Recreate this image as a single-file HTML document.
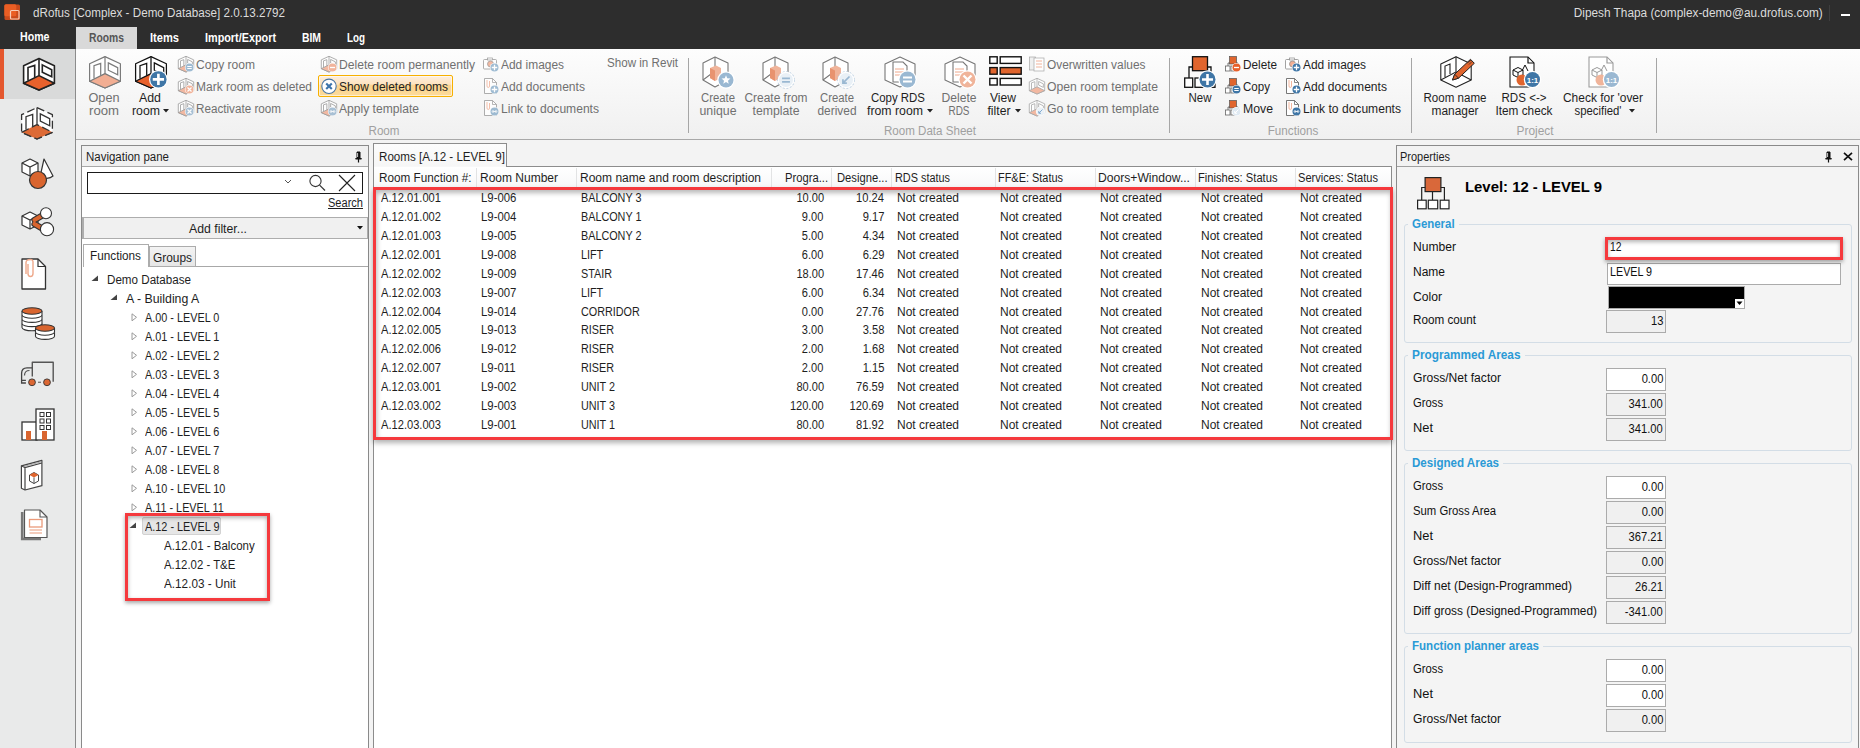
<!DOCTYPE html><html><head><meta charset="utf-8"><style>
html,body{margin:0;padding:0;width:1860px;height:748px;overflow:hidden;background:#f0f0f0;font-family:"Liberation Sans",sans-serif;}
.t{position:absolute;white-space:nowrap;font-family:"Liberation Sans",sans-serif;}
svg{overflow:visible}
</style></head><body>
<div style="position:absolute;left:0px;top:0px;width:1860px;height:49px;background:#2d2d2d"></div>
<svg style="position:absolute;left:4px;top:4px" width="17" height="17" viewBox="0 0 17 17"><rect x="0.5" y="0.5" width="15.5" height="15.5" rx="1.5" fill="#c94a1c"/><rect x="0.3" y="0.3" width="12" height="12" rx="1.5" fill="#ea5e24"/><rect x="6.5" y="6.5" width="8.5" height="8.5" rx="1" fill="none" stroke="#f7cdb8" stroke-width="1.2"/></svg>
<div class="t" style="left:33px;top:4.800000000000001px;line-height:16px;font-size:12px;color:#dcdcdc;font-weight:normal;transform:scaleX(0.9711);transform-origin:left center;">dRofus [Complex - Demo Database] 2.0.13.2792</div>
<div class="t" style="right:37px;top:4.800000000000001px;line-height:16px;font-size:12px;color:#dcdcdc;font-weight:normal;transform:scaleX(0.9852);transform-origin:right center;">Dipesh Thapa (complex-demo@au.drofus.com)</div>
<div style="position:absolute;left:1829px;top:5px;width:1px;height:16px;background:#3e3e3e"></div>
<div style="position:absolute;left:1841px;top:14px;width:9px;height:2px;background:#ffffff"></div>
<div style="position:absolute;left:76px;top:27px;width:61px;height:22px;background:#d9d9d9"></div>
<div class="t" style="left:20px;top:28.9px;line-height:16px;font-size:12px;color:#ffffff;font-weight:bold;transform:scaleX(0.8848);transform-origin:left center;">Home</div>
<div class="t" style="left:89px;top:29.9px;line-height:16px;font-size:12px;color:#555555;font-weight:bold;transform:scaleX(0.8605);transform-origin:left center;">Rooms</div>
<div class="t" style="left:150px;top:29.9px;line-height:16px;font-size:12px;color:#ffffff;font-weight:bold;transform:scaleX(0.9251);transform-origin:left center;">Items</div>
<div class="t" style="left:205px;top:29.9px;line-height:16px;font-size:12px;color:#ffffff;font-weight:bold;transform:scaleX(0.9025);transform-origin:left center;">Import/Export</div>
<div class="t" style="left:302px;top:29.9px;line-height:16px;font-size:12px;color:#ffffff;font-weight:bold;transform:scaleX(0.8638);transform-origin:left center;">BIM</div>
<div class="t" style="left:347px;top:29.9px;line-height:16px;font-size:12px;color:#ffffff;font-weight:bold;transform:scaleX(0.8185);transform-origin:left center;">Log</div>
<div style="position:absolute;left:76px;top:49px;width:1784px;height:90px;background:linear-gradient(#fdfdfd,#f0f0f0)"></div>
<div style="position:absolute;left:76px;top:139px;width:1784px;height:1px;background:#a8a8a8"></div>
<div style="position:absolute;left:688px;top:58px;width:1px;height:75px;background:#a6a6a6"></div>
<div style="position:absolute;left:1169px;top:58px;width:1px;height:75px;background:#a6a6a6"></div>
<div style="position:absolute;left:1411px;top:58px;width:1px;height:75px;background:#a6a6a6"></div>
<div style="position:absolute;left:1656px;top:58px;width:1px;height:75px;background:#a6a6a6"></div>
<div class="t" style="left:83.5px;width:600px;text-align:center;top:123.0px;line-height:16px;font-size:12px;color:#a0a0a0;font-weight:normal;transform:scaleX(0.9684);transform-origin:center center;">Room</div>
<div class="t" style="left:630px;width:600px;text-align:center;top:123.0px;line-height:16px;font-size:12px;color:#a0a0a0;font-weight:normal;transform:scaleX(0.9645);transform-origin:center center;">Room Data Sheet</div>
<div class="t" style="left:992.5px;width:600px;text-align:center;top:123.0px;line-height:16px;font-size:12px;color:#a0a0a0;font-weight:normal;transform:scaleX(0.9706);transform-origin:center center;">Functions</div>
<div class="t" style="left:1235px;width:600px;text-align:center;top:123.0px;line-height:16px;font-size:12px;color:#a0a0a0;font-weight:normal;transform:scaleX(0.9906);transform-origin:center center;">Project</div>
<svg style="position:absolute;left:89px;top:56px;" width="32" height="32" viewBox="0 0 32 32"><path d="M16 0.6 L31.4 7.7 L31.4 25.3 L16 32 L0.6 25.3 L0.6 7.7 Z" fill="#fff" stroke="#7a7a7a" stroke-width="1.2" stroke-linejoin="round"/><path d="M0.6 25.3 L16 17.6 L31.4 25.3 L16 32 Z" fill="#f2ae93" stroke="#7a7a7a" stroke-width="1.2" stroke-linejoin="round"/><path d="M16 0.6 L16 17.6" stroke="#7a7a7a" stroke-width="1.2"/><path d="M5 22.4 L5 9.6 L11.7 7.4 L11.7 19.6" fill="none" stroke="#7a7a7a" stroke-width="1.2"/><path d="M19.3 6.9 L28.7 11.7 L28.7 18.8 L19.3 14.2 Z" fill="none" stroke="#7a7a7a" stroke-width="1.2"/></svg>
<div class="t" style="left:-196.5px;width:600px;text-align:center;top:89.7px;line-height:16px;font-size:12px;color:#707070;font-weight:normal;transform:scaleX(1.0560);transform-origin:center center;">Open</div>
<div class="t" style="left:-196.5px;width:600px;text-align:center;top:102.8px;line-height:16px;font-size:12px;color:#707070;font-weight:normal;transform:scaleX(1.0973);transform-origin:center center;">room</div>
<svg style="position:absolute;left:135px;top:56px;" width="32" height="32" viewBox="0 0 32 32"><path d="M16 0.6 L31.4 7.7 L31.4 25.3 L16 32 L0.6 25.3 L0.6 7.7 Z" fill="#fff" stroke="#111" stroke-width="1.25" stroke-linejoin="round"/><path d="M0.6 25.3 L16 17.6 L31.4 25.3 L16 32 Z" fill="#e8612c" stroke="#111" stroke-width="1.25" stroke-linejoin="round"/><path d="M16 0.6 L16 17.6" stroke="#111" stroke-width="1.25"/><path d="M5 22.4 L5 9.6 L11.7 7.4 L11.7 19.6" fill="none" stroke="#111" stroke-width="1.25"/><path d="M19.3 6.9 L28.7 11.7 L28.7 18.8 L19.3 14.2 Z" fill="none" stroke="#111" stroke-width="1.25"/><circle cx="23.4" cy="23.4" r="9.399999999999999" fill="#fff"/><circle cx="23.4" cy="23.4" r="8.2" fill="#3f76a6"/><path d="M17.7625 23.4 H29.037499999999998 M23.4 17.7625 V29.037499999999998" stroke="#fff" stroke-width="2.665"/></svg>
<div class="t" style="left:-150px;width:600px;text-align:center;top:89.7px;line-height:16px;font-size:12px;color:#1e1e1e;font-weight:normal;transform:scaleX(1.0303);transform-origin:center center;">Add</div>
<div class="t" style="left:-154px;width:600px;text-align:center;top:102.8px;line-height:16px;font-size:12px;color:#1e1e1e;font-weight:normal;transform:scaleX(1.0241);transform-origin:center center;">room</div>
<svg style="position:absolute;left:163px;top:109px" width="6" height="4" viewBox="0 0 6 4"><path d="M0 0 H6 L3 3.5 Z" fill="#222"/></svg>
<svg style="position:absolute;left:178px;top:56px;opacity:0.85;" width="16" height="16" viewBox="0 0 32 32"><path d="M16 0.6 L31.4 7.7 L31.4 25.3 L16 32 L0.6 25.3 L0.6 7.7 Z" fill="#fff" stroke="#8a8a8a" stroke-width="1.6" stroke-linejoin="round"/><path d="M0.6 25.3 L16 17.6 L31.4 25.3 L16 32 Z" fill="#f2ae93" stroke="#8a8a8a" stroke-width="1.6" stroke-linejoin="round"/><path d="M16 0.6 L16 17.6" stroke="#8a8a8a" stroke-width="1.6"/><path d="M5 22.4 L5 9.6 L11.7 7.4 L11.7 19.6" fill="none" stroke="#8a8a8a" stroke-width="1.6"/><path d="M19.3 6.9 L28.7 11.7 L28.7 18.8 L19.3 14.2 Z" fill="none" stroke="#8a8a8a" stroke-width="1.6"/><circle cx="23" cy="23" r="9.2" fill="#fff"/><circle cx="23" cy="23" r="8" fill="#8fb1cc"/><path d="M18.5 21.0 H27.5 M18.5 25.0 H27.5" stroke="#fff" stroke-width="2.0"/></svg>
<div class="t" style="left:196px;top:57.0px;line-height:16px;font-size:12px;color:#707070;font-weight:normal;transform:scaleX(1.0053);transform-origin:left center;">Copy room</div>
<svg style="position:absolute;left:178px;top:78px;opacity:0.85;" width="16" height="16" viewBox="0 0 32 32"><path d="M16 0.6 L31.4 7.7 L31.4 25.3 L16 32 L0.6 25.3 L0.6 7.7 Z" fill="#fff" stroke="#8a8a8a" stroke-width="1.6" stroke-linejoin="round"/><path d="M0.6 25.3 L16 17.6 L31.4 25.3 L16 32 Z" fill="#f2ae93" stroke="#8a8a8a" stroke-width="1.6" stroke-linejoin="round"/><path d="M16 0.6 L16 17.6" stroke="#8a8a8a" stroke-width="1.6"/><path d="M5 22.4 L5 9.6 L11.7 7.4 L11.7 19.6" fill="none" stroke="#8a8a8a" stroke-width="1.6"/><path d="M19.3 6.9 L28.7 11.7 L28.7 18.8 L19.3 14.2 Z" fill="none" stroke="#8a8a8a" stroke-width="1.6"/><circle cx="23" cy="23" r="9.2" fill="#fff"/><circle cx="23" cy="23" r="8" fill="#f0a88c"/><path d="M19.0 19.0 L27.0 27.0 M27.0 19.0 L19.0 27.0" stroke="#fff" stroke-width="2.4"/></svg>
<div class="t" style="left:196px;top:79.0px;line-height:16px;font-size:12px;color:#707070;font-weight:normal;transform:scaleX(0.9995);transform-origin:left center;">Mark room as deleted</div>
<svg style="position:absolute;left:178px;top:100px;opacity:0.85;" width="16" height="16" viewBox="0 0 32 32"><path d="M16 0.6 L31.4 7.7 L31.4 25.3 L16 32 L0.6 25.3 L0.6 7.7 Z" fill="#fff" stroke="#8a8a8a" stroke-width="1.6" stroke-linejoin="round"/><path d="M0.6 25.3 L16 17.6 L31.4 25.3 L16 32 Z" fill="#f2ae93" stroke="#8a8a8a" stroke-width="1.6" stroke-linejoin="round"/><path d="M16 0.6 L16 17.6" stroke="#8a8a8a" stroke-width="1.6"/><path d="M5 22.4 L5 9.6 L11.7 7.4 L11.7 19.6" fill="none" stroke="#8a8a8a" stroke-width="1.6"/><path d="M19.3 6.9 L28.7 11.7 L28.7 18.8 L19.3 14.2 Z" fill="none" stroke="#8a8a8a" stroke-width="1.6"/><circle cx="23" cy="23" r="9.2" fill="#fff"/><circle cx="23" cy="23" r="8" fill="#9bb7cf"/><path d="M19.0 19.0 L27.0 27.0 M27.0 19.0 L19.0 27.0" stroke="#fff" stroke-width="2.4"/></svg>
<div class="t" style="left:196px;top:101.0px;line-height:16px;font-size:12px;color:#707070;font-weight:normal;transform:scaleX(0.9728);transform-origin:left center;">Reactivate room</div>
<svg style="position:absolute;left:321px;top:56px;opacity:0.85;" width="16" height="16" viewBox="0 0 32 32"><path d="M16 0.6 L31.4 7.7 L31.4 25.3 L16 32 L0.6 25.3 L0.6 7.7 Z" fill="#fff" stroke="#8a8a8a" stroke-width="1.6" stroke-linejoin="round"/><path d="M0.6 25.3 L16 17.6 L31.4 25.3 L16 32 Z" fill="#f2ae93" stroke="#8a8a8a" stroke-width="1.6" stroke-linejoin="round"/><path d="M16 0.6 L16 17.6" stroke="#8a8a8a" stroke-width="1.6"/><path d="M5 22.4 L5 9.6 L11.7 7.4 L11.7 19.6" fill="none" stroke="#8a8a8a" stroke-width="1.6"/><path d="M19.3 6.9 L28.7 11.7 L28.7 18.8 L19.3 14.2 Z" fill="none" stroke="#8a8a8a" stroke-width="1.6"/><circle cx="23" cy="23" r="9.2" fill="#fff"/><circle cx="23" cy="23" r="8" fill="#f0a88c"/><path d="M18.0 23 H28.0" stroke="#fff" stroke-width="2.6"/></svg>
<div class="t" style="left:339px;top:57.0px;line-height:16px;font-size:12px;color:#707070;font-weight:normal;transform:scaleX(1.0094);transform-origin:left center;">Delete room permanently</div>
<div style="position:absolute;left:318px;top:75px;width:135px;height:22px;background:linear-gradient(#fdeedd 0%,#fde3c0 40%,#fbd48f 48%,#fcdb9a 100%);border:1px solid #f7b000;box-sizing:border-box;border-radius:2px;box-shadow:inset 0 0 0 1px rgba(255,255,255,0.55)"></div>
<svg style="position:absolute;left:321px;top:78px" width="17" height="17" viewBox="0 0 17 17"><circle cx="8" cy="8.3" r="7.2" fill="#fff" stroke="#4a76a3" stroke-width="1.1"/><path d="M5.2 5.5 L10.8 11.1 M10.8 5.5 L5.2 11.1" stroke="#3d74ab" stroke-width="2.1"/></svg>
<div class="t" style="left:339px;top:79.0px;line-height:16px;font-size:12px;color:#1e1e1e;font-weight:normal;transform:scaleX(0.9963);transform-origin:left center;">Show deleted rooms</div>
<svg style="position:absolute;left:321px;top:100px;opacity:0.85;" width="16" height="16" viewBox="0 0 32 32"><path d="M16 0.6 L31.4 7.7 L31.4 25.3 L16 32 L0.6 25.3 L0.6 7.7 Z" fill="#fff" stroke="#8a8a8a" stroke-width="1.6" stroke-linejoin="round"/><path d="M0.6 25.3 L16 17.6 L31.4 25.3 L16 32 Z" fill="#f2ae93" stroke="#8a8a8a" stroke-width="1.6" stroke-linejoin="round"/><path d="M16 0.6 L16 17.6" stroke="#8a8a8a" stroke-width="1.6"/><path d="M5 22.4 L5 9.6 L11.7 7.4 L11.7 19.6" fill="none" stroke="#8a8a8a" stroke-width="1.6"/><path d="M19.3 6.9 L28.7 11.7 L28.7 18.8 L19.3 14.2 Z" fill="none" stroke="#8a8a8a" stroke-width="1.6"/><circle cx="23" cy="23" r="9.2" fill="#fff"/><circle cx="23" cy="23" r="8" fill="#9bb7cf"/><path d="M19.0 23 H27.0" stroke="#fff" stroke-width="1.6"/><circle cx="20.0" cy="23" r="2.0" fill="none" stroke="#fff" stroke-width="1.2"/><circle cx="26.0" cy="23" r="2.0" fill="none" stroke="#fff" stroke-width="1.2"/></svg>
<div class="t" style="left:339px;top:101.0px;line-height:16px;font-size:12px;color:#707070;font-weight:normal;transform:scaleX(1.0078);transform-origin:left center;">Apply template</div>
<svg style="position:absolute;left:483px;top:56px;opacity:0.85;" width="16" height="16" viewBox="0 0 32 32"><rect x="1" y="7" width="26" height="19" rx="2" fill="#fff" stroke="#8a8a8a" stroke-width="1.6"/><rect x="9" y="4" width="10" height="4" fill="#fff" stroke="#8a8a8a" stroke-width="1.4"/><circle cx="15" cy="16" r="6" fill="#f2ae93" stroke="#8a8a8a" stroke-width="1.4"/><circle cx="23" cy="23" r="9.2" fill="#fff"/><circle cx="23" cy="23" r="8" fill="#8fb1cc"/><path d="M17.5 23 H28.5 M23 17.5 V28.5" stroke="#fff" stroke-width="2.6"/></svg>
<div class="t" style="left:501px;top:57.0px;line-height:16px;font-size:12px;color:#707070;font-weight:normal;transform:scaleX(0.9941);transform-origin:left center;">Add images</div>
<svg style="position:absolute;left:483px;top:78px;opacity:0.85;" width="16" height="16" viewBox="0 0 32 32"><path d="M3 1 H19 L27 9 V31 H3 Z" fill="#fff" stroke="#8a8a8a" stroke-width="1.6"/><path d="M19 1 V9 H27" fill="none" stroke="#8a8a8a" stroke-width="1.4"/><path d="M8 4 V16 Q8 19 10.5 19 Q13 19 13 16 V6" fill="none" stroke="#f2ae93" stroke-width="1.8"/><circle cx="23" cy="23" r="9.2" fill="#fff"/><circle cx="23" cy="23" r="8" fill="#8fb1cc"/><path d="M17.5 23 H28.5 M23 17.5 V28.5" stroke="#fff" stroke-width="2.6"/></svg>
<div class="t" style="left:501px;top:79.0px;line-height:16px;font-size:12px;color:#707070;font-weight:normal;transform:scaleX(1.0073);transform-origin:left center;">Add documents</div>
<svg style="position:absolute;left:483px;top:100px;opacity:0.85;" width="16" height="16" viewBox="0 0 32 32"><path d="M3 1 H19 L27 9 V31 H3 Z" fill="#fff" stroke="#8a8a8a" stroke-width="1.6"/><path d="M19 1 V9 H27" fill="none" stroke="#8a8a8a" stroke-width="1.4"/><path d="M8 4 V16 Q8 19 10.5 19 Q13 19 13 16 V6" fill="none" stroke="#f2ae93" stroke-width="1.8"/><circle cx="23" cy="23" r="9.2" fill="#fff"/><circle cx="23" cy="23" r="8" fill="#8fb1cc"/><path d="M19.0 23 H27.0" stroke="#fff" stroke-width="1.6"/><circle cx="20.0" cy="23" r="2.0" fill="none" stroke="#fff" stroke-width="1.2"/><circle cx="26.0" cy="23" r="2.0" fill="none" stroke="#fff" stroke-width="1.2"/></svg>
<div class="t" style="left:501px;top:101.0px;line-height:16px;font-size:12px;color:#707070;font-weight:normal;transform:scaleX(1.0062);transform-origin:left center;">Link to documents</div>
<div class="t" style="left:607px;top:55.0px;line-height:16px;font-size:12px;color:#707070;font-weight:normal;transform:scaleX(0.9677);transform-origin:left center;">Show in Revit</div>
<svg style="position:absolute;left:702px;top:56px;" width="32" height="32" viewBox="0 0 32 32"><path d="M13 1 L26 7 V24 L13 31 L1 24 V7 Z" fill="#fff" stroke="#777" stroke-width="1.1" stroke-linejoin="round"/><path d="M13 1 V15 L1 24 M13 15 L26 22" fill="none" stroke="#777" stroke-width="1.1"/><path d="M8 12 L14 9.5 L19 12 V22 L13 25 L8 22 Z" fill="#f0b49a"/><path d="M8 12 L13 14.5 V25 L8 22 Z" fill="#e8936f"/><circle cx="24" cy="24" r="8.7" fill="#fff"/><circle cx="24" cy="24" r="7.5" fill="#9ab8d2"/><polygon points="24.00,19.31 25.21,22.33 28.46,22.55 25.96,24.64 26.76,27.79 24.00,26.06 21.24,27.79 22.04,24.64 19.54,22.55 22.79,22.33" fill="#fff"/></svg>
<div class="t" style="left:418px;width:600px;text-align:center;top:89.7px;line-height:16px;font-size:12px;color:#707070;font-weight:normal;transform:scaleX(0.9439);transform-origin:center center;">Create</div>
<div class="t" style="left:418px;width:600px;text-align:center;top:102.8px;line-height:16px;font-size:12px;color:#707070;font-weight:normal;transform:scaleX(1.0267);transform-origin:center center;">unique</div>
<svg style="position:absolute;left:762px;top:56px;" width="32" height="32" viewBox="0 0 32 32"><path d="M13 1 L26 7 V24 L13 31 L1 24 V7 Z" fill="#fff" stroke="#777" stroke-width="1.1" stroke-linejoin="round"/><path d="M13 1 V15 L1 24 M13 15 L26 22" fill="none" stroke="#777" stroke-width="1.1"/><path d="M8 12 L14 9.5 L19 12 V22 L13 25 L8 22 Z" fill="#f0b49a"/><path d="M8 12 L13 14.5 V25 L8 22 Z" fill="#e8936f"/><circle cx="24" cy="24" r="8.2" fill="none" stroke="#b8cde0" stroke-width="1.2" stroke-dasharray="2 1.5"/><circle cx="24" cy="24" r="8.2" fill="#fff"/><circle cx="24" cy="24" r="7" fill="#e9f0f6"/><path d="M20.0625 22.25 H27.9375 M20.0625 25.75 H27.9375" stroke="#9ab8d2" stroke-width="1.75"/></svg>
<div class="t" style="left:476px;width:600px;text-align:center;top:89.7px;line-height:16px;font-size:12px;color:#707070;font-weight:normal;transform:scaleX(0.9944);transform-origin:center center;">Create from</div>
<div class="t" style="left:476px;width:600px;text-align:center;top:102.8px;line-height:16px;font-size:12px;color:#707070;font-weight:normal;transform:scaleX(1.0211);transform-origin:center center;">template</div>
<svg style="position:absolute;left:822px;top:56px;" width="32" height="32" viewBox="0 0 32 32"><path d="M13 1 L26 7 V24 L13 31 L1 24 V7 Z" fill="#fff" stroke="#777" stroke-width="1.1" stroke-linejoin="round"/><path d="M13 1 V15 L1 24 M13 15 L26 22" fill="none" stroke="#777" stroke-width="1.1"/><path d="M8 12 L14 9.5 L19 12 V22 L13 25 L8 22 Z" fill="#f0b49a"/><path d="M8 12 L13 14.5 V25 L8 22 Z" fill="#e8936f"/><circle cx="24" cy="24" r="8.2" fill="none" stroke="#b8cde0" stroke-width="1.2" stroke-dasharray="2 1.5"/><circle cx="24" cy="24" r="8.2" fill="#fff"/><circle cx="24" cy="24" r="7" fill="#e9f0f6"/><path d="M27.5 20.5 L21.375 26.625 M20.9375 23.125 V27.0625 H24.875" fill="none" stroke="#9ab8d2" stroke-width="1.75"/></svg>
<div class="t" style="left:537px;width:600px;text-align:center;top:89.7px;line-height:16px;font-size:12px;color:#707070;font-weight:normal;transform:scaleX(0.9439);transform-origin:center center;">Create</div>
<div class="t" style="left:537px;width:600px;text-align:center;top:102.8px;line-height:16px;font-size:12px;color:#707070;font-weight:normal;transform:scaleX(0.9909);transform-origin:center center;">derived</div>
<svg style="position:absolute;left:884px;top:56px;" width="32" height="32" viewBox="0 0 32 32"><path d="M16 1 L31 8 V24 L16 31 L1 24 V8 Z" fill="#fff" stroke="#777" stroke-width="1.1" stroke-linejoin="round"/><path d="M9 6 H19 L23 10 V26 H9 Z" fill="#fff" stroke="#777" stroke-width="1.1"/><path d="M11 13 H20 M11 16 H20 M11 19 H17" stroke="#f0a88c" stroke-width="1"/><circle cx="23.5" cy="23.5" r="9.2" fill="#fff"/><circle cx="23.5" cy="23.5" r="8" fill="#9ab8d2"/><path d="M19.0 21.5 H28.0 M19.0 25.5 H28.0" stroke="#fff" stroke-width="2.0"/></svg>
<div class="t" style="left:598px;width:600px;text-align:center;top:89.7px;line-height:16px;font-size:12px;color:#1e1e1e;font-weight:normal;transform:scaleX(0.9526);transform-origin:center center;">Copy RDS</div>
<div class="t" style="left:595px;width:600px;text-align:center;top:102.8px;line-height:16px;font-size:12px;color:#1e1e1e;font-weight:normal;transform:scaleX(1.0242);transform-origin:center center;">from room</div>
<svg style="position:absolute;left:927px;top:109px" width="6" height="4" viewBox="0 0 6 4"><path d="M0 0 H6 L3 3.5 Z" fill="#222"/></svg>
<svg style="position:absolute;left:944px;top:56px;" width="32" height="32" viewBox="0 0 32 32"><path d="M16 1 L31 8 V24 L16 31 L1 24 V8 Z" fill="#fff" stroke="#777" stroke-width="1.1" stroke-linejoin="round"/><path d="M9 6 H19 L23 10 V26 H9 Z" fill="#fff" stroke="#777" stroke-width="1.1"/><path d="M11 13 H20 M11 16 H20 M11 19 H17" stroke="#f0a88c" stroke-width="1"/><circle cx="23.5" cy="23.5" r="9.2" fill="#fff"/><circle cx="23.5" cy="23.5" r="8" fill="#f0b49a"/><path d="M19.5 19.5 L27.5 27.5 M27.5 19.5 L19.5 27.5" stroke="#fff" stroke-width="2.4"/></svg>
<div class="t" style="left:659px;width:600px;text-align:center;top:89.7px;line-height:16px;font-size:12px;color:#707070;font-weight:normal;transform:scaleX(1.0089);transform-origin:center center;">Delete</div>
<div class="t" style="left:659px;width:600px;text-align:center;top:102.8px;line-height:16px;font-size:12px;color:#707070;font-weight:normal;transform:scaleX(0.8288);transform-origin:center center;">RDS</div>
<svg style="position:absolute;left:989px;top:56px" width="33" height="30" viewBox="0 0 33 30"><rect x="0.8" y="0.8" width="7.4" height="6.6" fill="#fff" stroke="#111" stroke-width="1.4"/><rect x="11.2" y="0.8" width="21" height="6.6" fill="#fff" stroke="#111" stroke-width="1.4"/><rect x="0.8" y="11.6" width="7.4" height="6.6" fill="#e0652e" stroke="#111" stroke-width="1.4"/><rect x="11.2" y="11.6" width="21" height="6.6" fill="#e0652e" stroke="#111" stroke-width="1.4"/><rect x="0.8" y="22.4" width="7.4" height="6.6" fill="#fff" stroke="#111" stroke-width="1.4"/><rect x="11.2" y="22.4" width="21" height="6.6" fill="#fff" stroke="#111" stroke-width="1.4"/></svg>
<div class="t" style="left:703px;width:600px;text-align:center;top:89.7px;line-height:16px;font-size:12px;color:#1e1e1e;font-weight:normal;transform:scaleX(1.0080);transform-origin:center center;">View</div>
<div class="t" style="left:699px;width:600px;text-align:center;top:102.8px;line-height:16px;font-size:12px;color:#1e1e1e;font-weight:normal;transform:scaleX(1.0145);transform-origin:center center;">filter</div>
<svg style="position:absolute;left:1015px;top:109px" width="6" height="4" viewBox="0 0 6 4"><path d="M0 0 H6 L3 3.5 Z" fill="#222"/></svg>
<svg style="position:absolute;left:1029px;top:56px;opacity:0.85;" width="16" height="16" viewBox="0 0 32 32"><rect x="1" y="2" width="12" height="26" fill="#eee" stroke="#999" stroke-width="1.4"/><rect x="10" y="4" width="20" height="26" fill="#fff" stroke="#999" stroke-width="1.4"/><path d="M14 10 H26 M14 16 H26 M14 22 H26" stroke="#f0a88c" stroke-width="2"/></svg>
<div class="t" style="left:1047px;top:57.0px;line-height:16px;font-size:12px;color:#707070;font-weight:normal;transform:scaleX(0.9912);transform-origin:left center;">Overwritten values</div>
<svg style="position:absolute;left:1029px;top:78px;opacity:0.85;" width="16" height="16" viewBox="0 0 32 32"><path d="M16 0.6 L31.4 7.7 L31.4 25.3 L16 32 L0.6 25.3 L0.6 7.7 Z" fill="#fff" stroke="#999" stroke-width="1.6" stroke-linejoin="round"/><path d="M0.6 25.3 L16 17.6 L31.4 25.3 L16 32 Z" fill="#f2ae93" stroke="#999" stroke-width="1.6" stroke-linejoin="round"/><path d="M16 0.6 L16 17.6" stroke="#999" stroke-width="1.6"/><path d="M5 22.4 L5 9.6 L11.7 7.4 L11.7 19.6" fill="none" stroke="#999" stroke-width="1.6"/><path d="M19.3 6.9 L28.7 11.7 L28.7 18.8 L19.3 14.2 Z" fill="none" stroke="#999" stroke-width="1.6"/></svg>
<div class="t" style="left:1047px;top:79.0px;line-height:16px;font-size:12px;color:#707070;font-weight:normal;transform:scaleX(1.0147);transform-origin:left center;">Open room template</div>
<svg style="position:absolute;left:1029px;top:100px;opacity:0.85;" width="16" height="16" viewBox="0 0 32 32"><path d="M16 0.6 L31.4 7.7 L31.4 25.3 L16 32 L0.6 25.3 L0.6 7.7 Z" fill="#fff" stroke="#999" stroke-width="1.6" stroke-linejoin="round"/><path d="M0.6 25.3 L16 17.6 L31.4 25.3 L16 32 Z" fill="#f2ae93" stroke="#999" stroke-width="1.6" stroke-linejoin="round"/><path d="M16 0.6 L16 17.6" stroke="#999" stroke-width="1.6"/><path d="M5 22.4 L5 9.6 L11.7 7.4 L11.7 19.6" fill="none" stroke="#999" stroke-width="1.6"/><path d="M19.3 6.9 L28.7 11.7 L28.7 18.8 L19.3 14.2 Z" fill="none" stroke="#999" stroke-width="1.6"/><circle cx="23" cy="23" r="9.2" fill="#fff"/><circle cx="23" cy="23" r="8" fill="#eaf1f7"/><path d="M27.0 19.0 L20.0 26.0 M19.5 22.0 V26.5 H24.0" fill="none" stroke="#6f9fca" stroke-width="2.0"/></svg>
<div class="t" style="left:1047px;top:101.0px;line-height:16px;font-size:12px;color:#707070;font-weight:normal;transform:scaleX(1.0239);transform-origin:left center;">Go to room template</div>
<svg style="position:absolute;left:1184px;top:56px;" width="32" height="32" viewBox="0 0 32 32"><path d="M5 22 V11 H27 V22" fill="none" stroke="#111" stroke-width="1.3"/><rect x="0.7" y="22" width="8" height="9.3" fill="#fff" stroke="#111" stroke-width="1.3"/><rect x="11" y="22" width="8" height="9.3" fill="#fff" stroke="#111" stroke-width="1.3"/><rect x="22" y="22" width="9" height="9.3" fill="#fff" stroke="#111" stroke-width="1.3"/><rect x="8.5" y="0.7" width="15" height="14" fill="#e0652e" stroke="#111" stroke-width="1.3"/><circle cx="23.5" cy="23.5" r="9.2" fill="#fff"/><circle cx="23.5" cy="23.5" r="8" fill="#3f76a6"/><path d="M18.0 23.5 H29.0 M23.5 18.0 V29.0" stroke="#fff" stroke-width="2.6"/></svg>
<div class="t" style="left:900px;width:600px;text-align:center;top:89.7px;line-height:16px;font-size:12px;color:#1e1e1e;font-weight:normal;transform:scaleX(0.9581);transform-origin:center center;">New</div>
<svg style="position:absolute;left:1225px;top:56px;" width="16" height="16" viewBox="0 0 32 32"><path d="M6 20 V14 H26 V20" fill="none" stroke="#555" stroke-width="1.6"/><rect x="1" y="20" width="9" height="10" fill="#fff" stroke="#666" stroke-width="1.6"/><rect x="12" y="20" width="9" height="10" fill="#fff" stroke="#666" stroke-width="1.6"/><rect x="9" y="1" width="14" height="15" fill="#e0652e" stroke="#555" stroke-width="1.4"/><circle cx="23" cy="23" r="9.2" fill="#fff"/><circle cx="23" cy="23" r="8" fill="#e8612c"/><path d="M18.0 23 H28.0" stroke="#fff" stroke-width="2.6"/></svg>
<div class="t" style="left:1243px;top:57.0px;line-height:16px;font-size:12px;color:#1e1e1e;font-weight:normal;transform:scaleX(0.9801);transform-origin:left center;">Delete</div>
<svg style="position:absolute;left:1225px;top:78px;" width="16" height="16" viewBox="0 0 32 32"><path d="M6 20 V14 H26 V20" fill="none" stroke="#555" stroke-width="1.6"/><rect x="1" y="20" width="9" height="10" fill="#fff" stroke="#666" stroke-width="1.6"/><rect x="12" y="20" width="9" height="10" fill="#fff" stroke="#666" stroke-width="1.6"/><rect x="9" y="1" width="14" height="15" fill="#e0652e" stroke="#555" stroke-width="1.4"/><circle cx="23" cy="23" r="9.2" fill="#fff"/><circle cx="23" cy="23" r="8" fill="#3f76a6"/><path d="M18.5 21.0 H27.5 M18.5 25.0 H27.5" stroke="#fff" stroke-width="2.0"/></svg>
<div class="t" style="left:1243px;top:79.0px;line-height:16px;font-size:12px;color:#1e1e1e;font-weight:normal;transform:scaleX(0.9638);transform-origin:left center;">Copy</div>
<svg style="position:absolute;left:1225px;top:100px;" width="16" height="16" viewBox="0 0 32 32"><path d="M6 20 V14 H26 V20" fill="none" stroke="#555" stroke-width="1.6"/><rect x="1" y="20" width="9" height="10" fill="#fff" stroke="#666" stroke-width="1.6"/><rect x="12" y="20" width="9" height="10" fill="#fff" stroke="#666" stroke-width="1.6"/><rect x="9" y="1" width="14" height="15" fill="#e0652e" stroke="#555" stroke-width="1.4"/><circle cx="23" cy="23" r="9.2" fill="#fff"/><circle cx="23" cy="23" r="8" fill="#dfe9f2"/><path d="M27.0 19.0 L20.0 26.0 M19.5 22.0 V26.5 H24.0" fill="none" stroke="#fff" stroke-width="2.0"/></svg>
<div class="t" style="left:1243px;top:101.0px;line-height:16px;font-size:12px;color:#1e1e1e;font-weight:normal;transform:scaleX(1.0223);transform-origin:left center;">Move</div>
<svg style="position:absolute;left:1285px;top:56px;" width="16" height="16" viewBox="0 0 32 32"><rect x="1" y="7" width="26" height="19" rx="2" fill="#fff" stroke="#8a8a8a" stroke-width="1.6"/><rect x="9" y="4" width="10" height="4" fill="#fff" stroke="#8a8a8a" stroke-width="1.4"/><circle cx="15" cy="16" r="6" fill="#f2ae93" stroke="#8a8a8a" stroke-width="1.4"/><circle cx="23" cy="23" r="9.2" fill="#fff"/><circle cx="23" cy="23" r="8" fill="#3f76a6"/><path d="M17.5 23 H28.5 M23 17.5 V28.5" stroke="#fff" stroke-width="2.6"/></svg>
<div class="t" style="left:1303px;top:57.0px;line-height:16px;font-size:12px;color:#1e1e1e;font-weight:normal;transform:scaleX(0.9941);transform-origin:left center;">Add images</div>
<svg style="position:absolute;left:1285px;top:78px;" width="16" height="16" viewBox="0 0 32 32"><path d="M3 1 H19 L27 9 V31 H3 Z" fill="#fff" stroke="#555" stroke-width="1.6"/><path d="M19 1 V9 H27" fill="none" stroke="#555" stroke-width="1.4"/><path d="M8 4 V16 Q8 19 10.5 19 Q13 19 13 16 V6" fill="none" stroke="#f2ae93" stroke-width="1.8"/><circle cx="23" cy="23" r="9.2" fill="#fff"/><circle cx="23" cy="23" r="8" fill="#3f76a6"/><path d="M17.5 23 H28.5 M23 17.5 V28.5" stroke="#fff" stroke-width="2.6"/></svg>
<div class="t" style="left:1303px;top:79.0px;line-height:16px;font-size:12px;color:#1e1e1e;font-weight:normal;transform:scaleX(1.0073);transform-origin:left center;">Add documents</div>
<svg style="position:absolute;left:1285px;top:100px;" width="16" height="16" viewBox="0 0 32 32"><path d="M3 1 H19 L27 9 V31 H3 Z" fill="#fff" stroke="#555" stroke-width="1.6"/><path d="M19 1 V9 H27" fill="none" stroke="#555" stroke-width="1.4"/><path d="M8 4 V16 Q8 19 10.5 19 Q13 19 13 16 V6" fill="none" stroke="#f2ae93" stroke-width="1.8"/><circle cx="23" cy="23" r="9.2" fill="#fff"/><circle cx="23" cy="23" r="8" fill="#3f76a6"/><path d="M19.0 23 H27.0" stroke="#fff" stroke-width="1.6"/><circle cx="20.0" cy="23" r="2.0" fill="none" stroke="#fff" stroke-width="1.2"/><circle cx="26.0" cy="23" r="2.0" fill="none" stroke="#fff" stroke-width="1.2"/></svg>
<div class="t" style="left:1303px;top:101.0px;line-height:16px;font-size:12px;color:#1e1e1e;font-weight:normal;transform:scaleX(1.0062);transform-origin:left center;">Link to documents</div>
<svg style="position:absolute;left:1440px;top:56px;" width="32" height="32" viewBox="0 0 32 32"><path d="M16 0.8 L31.2 8 V24 L16 31.2 L0.8 24 V8 Z" fill="#fff" stroke="#222" stroke-width="1.1" stroke-linejoin="round"/><path d="M16 0.8 V16 L0.8 24 M16 16 L31.2 24" fill="none" stroke="#222" stroke-width="1.1"/><path d="M5 21 V10 L10 8 V18" fill="none" stroke="#222" stroke-width="1.1"/><path d="M12.5 24 L18.5 22.2 L34.3 7.3 L30.5 3.3 L14.7 18.2 Z" fill="#e0652e" stroke="#222" stroke-width="1"/><path d="M12.5 24 L14.7 18.2 L18.5 22.2 Z" fill="#e0652e" stroke="#222" stroke-width="0.9"/><path d="M29 8.5 L32 5.5 M27.5 7 L31 4" stroke="#222" stroke-width="0.7"/></svg>
<div class="t" style="left:1154.5px;width:600px;text-align:center;top:89.7px;line-height:16px;font-size:12px;color:#1e1e1e;font-weight:normal;transform:scaleX(0.9638);transform-origin:center center;">Room name</div>
<div class="t" style="left:1154.5px;width:600px;text-align:center;top:102.8px;line-height:16px;font-size:12px;color:#1e1e1e;font-weight:normal;transform:scaleX(0.9923);transform-origin:center center;">manager</div>
<svg style="position:absolute;left:1509px;top:56px;" width="32" height="32" viewBox="0 0 32 32"><path d="M1 1 H19 L25 7 V31 H1 Z" fill="#fff" stroke="#111" stroke-width="1.05"/><path d="M19 1 V7 H25" fill="none" stroke="#111" stroke-width="1.2"/><path d="M4 14 L9 11.5 L14 14 V19 L9 21.5 L4 19 Z M4 14 L9 16.5 L14 14 M9 16.5 V21.5" fill="#fff" stroke="#111" stroke-width="1"/><path d="M13 15 L16 9 L19 15" fill="none" stroke="#111" stroke-width="1"/><circle cx="13" cy="24" r="5.5" fill="#e0652e"/><circle cx="23.5" cy="23.5" r="8.7" fill="#fff"/><circle cx="23.5" cy="23.5" r="7.5" fill="#3f76a6"/><text x="23.5" y="26.5" font-size="8" font-family="Liberation Sans" font-weight="bold" text-anchor="middle" fill="#fff">1:1</text></svg>
<div class="t" style="left:1224px;width:600px;text-align:center;top:89.7px;line-height:16px;font-size:12px;color:#1e1e1e;font-weight:normal;transform:scaleX(0.9640);transform-origin:center center;">RDS &lt;-&gt;</div>
<div class="t" style="left:1224px;width:600px;text-align:center;top:102.8px;line-height:16px;font-size:12px;color:#1e1e1e;font-weight:normal;transform:scaleX(0.9824);transform-origin:center center;">Item check</div>
<svg style="position:absolute;left:1588px;top:56px;" width="32" height="32" viewBox="0 0 32 32"><path d="M1 1 H19 L25 7 V31 H1 Z" fill="#fff" stroke="#999" stroke-width="1.05"/><path d="M19 1 V7 H25" fill="none" stroke="#999" stroke-width="1.2"/><path d="M4 14 L9 11.5 L14 14 V19 L9 21.5 L4 19 Z M4 14 L9 16.5 L14 14 M9 16.5 V21.5" fill="#fff" stroke="#999" stroke-width="1"/><path d="M13 15 L16 9 L19 15" fill="none" stroke="#999" stroke-width="1"/><circle cx="13" cy="24" r="5.5" fill="#f0b49a"/><circle cx="23.5" cy="23.5" r="8.7" fill="#fff"/><circle cx="23.5" cy="23.5" r="7.5" fill="#9ab8d2"/><text x="23.5" y="26.5" font-size="8" font-family="Liberation Sans" font-weight="bold" text-anchor="middle" fill="#fff">1:1</text></svg>
<div class="t" style="left:1303px;width:600px;text-align:center;top:89.7px;line-height:16px;font-size:12px;color:#1e1e1e;font-weight:normal;transform:scaleX(0.9960);transform-origin:center center;">Check for 'over</div>
<div class="t" style="left:1298px;width:600px;text-align:center;top:102.8px;line-height:16px;font-size:12px;color:#1e1e1e;font-weight:normal;transform:scaleX(0.9465);transform-origin:center center;">specified'</div>
<svg style="position:absolute;left:1629px;top:109px" width="6" height="4" viewBox="0 0 6 4"><path d="M0 0 H6 L3 3.5 Z" fill="#222"/></svg>
<div style="position:absolute;left:0px;top:49px;width:75px;height:699px;background:#e9eaea"></div>
<div style="position:absolute;left:75px;top:49px;width:1px;height:699px;background:#8c8c8c"></div>
<div style="position:absolute;left:0px;top:49px;width:75px;height:50px;background:#d9dada"></div>
<div style="position:absolute;left:0px;top:49px;width:4px;height:50px;background:#e4572e"></div>
<svg style="position:absolute;left:23px;top:58px;" width="32" height="32" viewBox="0 0 32 32"><path d="M16 0.6 L31.4 7.7 L31.4 25.3 L16 32 L0.6 25.3 L0.6 7.7 Z" fill="#fff" stroke="#222" stroke-width="1.6" stroke-linejoin="round"/><path d="M0.6 25.3 L16 17.6 L31.4 25.3 L16 32 Z" fill="#e8612c" stroke="#222" stroke-width="1.6" stroke-linejoin="round"/><path d="M16 0.6 L16 17.6" stroke="#222" stroke-width="1.6"/><path d="M5 22.4 L5 9.6 L11.7 7.4 L11.7 19.6" fill="none" stroke="#222" stroke-width="1.6"/><path d="M19.3 6.9 L28.7 11.7 L28.7 18.8 L19.3 14.2 Z" fill="none" stroke="#222" stroke-width="1.6"/></svg>
<svg style="position:absolute;left:21px;top:107px;" width="32" height="32" viewBox="0 0 32 32"><path d="M16 0.6 L31.4 7.7 L31.4 25.3 L16 32 L0.6 25.3 L0.6 7.7 Z" fill="#fff" stroke-dasharray="8 3.5" stroke="#333" stroke-width="1.3" stroke-linejoin="round"/><path d="M0.6 25.3 L16 17.6 L31.4 25.3 L16 32 Z" fill="#dd6a35" stroke-dasharray="8 3.5" stroke="#333" stroke-width="1.3" stroke-linejoin="round"/><path d="M16 0.6 L16 17.6" stroke="#333" stroke-width="1.3"/><path d="M5 22.4 L5 9.6 L11.7 7.4 L11.7 19.6" fill="none" stroke="#333" stroke-width="1.3"/><path d="M19.3 6.9 L28.7 11.7 L28.7 18.8 L19.3 14.2 Z" fill="none" stroke="#333" stroke-width="1.3"/></svg>
<svg style="position:absolute;left:21px;top:157px" width="33" height="32" viewBox="0 0 33 32"><path d="M1 6 L9 2 L17 6 V15 L9 19 L1 15 Z" fill="#fff" stroke="#333" stroke-width="1.2" stroke-linejoin="round"/><path d="M1 6 L9 10 L17 6 M9 10 V19" fill="none" stroke="#333" stroke-width="1.2"/><path d="M23 2 L32 19 Q28 23 19 20 Z" fill="#fff" stroke="#333" stroke-width="1.2" stroke-linejoin="round"/><circle cx="17" cy="23" r="8.5" fill="#d9652f" stroke="#333" stroke-width="1.2"/></svg>
<svg style="position:absolute;left:21px;top:207px" width="33" height="30" viewBox="0 0 33 30"><path d="M1 9 L9 5 L17 9 V18 L9 22 L1 18 Z" fill="#fff" stroke="#333" stroke-width="1.2" stroke-linejoin="round"/><path d="M1 9 L9 13 L17 9 M9 13 V22" fill="none" stroke="#333" stroke-width="1.2"/><path d="M13.5 13 L23 7.5 M13.5 17 L22 22" stroke="#333" stroke-width="6.2" stroke-linecap="round"/><path d="M13.5 13 L23 7.5 M13.5 17 L22 22" stroke="#d9652f" stroke-width="4.2" stroke-linecap="round"/><circle cx="25" cy="6.3" r="5.5" fill="#fff" stroke="#333" stroke-width="1.1"/><circle cx="26" cy="22.2" r="6.6" fill="#fff" stroke="#333" stroke-width="1.1"/></svg>
<svg style="position:absolute;left:21px;top:258px" width="26" height="32" viewBox="0 0 26 32"><path d="M1 1 H17 L24.5 8.5 V31 H1 Z" fill="#fff" stroke="#333" stroke-width="1.3" stroke-linejoin="round"/><path d="M17 1 V8.5 H24.5" fill="none" stroke="#333" stroke-width="1.2"/><path d="M7 6 V15.5 Q7 18.5 9.5 18.5 Q12 18.5 12 15.5 V4 Q12 1.5 9.5 1.5 Q5 1.5 5 4.5 V16" fill="none" stroke="#eea88a" stroke-width="1.4"/></svg>
<svg style="position:absolute;left:21px;top:309px" width="34" height="32" viewBox="0 0 34 32"><path d="M1 14.600000000000001 V18.6 A10 3.2 0 0 0 21 18.6 V14.600000000000001" fill="#fff" stroke="#333" stroke-width="1.1"/><path d="M1 10.4 V14.4 A10 3.2 0 0 0 21 14.4 V10.4" fill="#fff" stroke="#333" stroke-width="1.1"/><path d="M1 6.2 V10.2 A10 3.2 0 0 0 21 10.2 V6.2" fill="#fff" stroke="#333" stroke-width="1.1"/><path d="M1 2.0 V6.0 A10 3.2 0 0 0 21 6.0 V2.0" fill="#fff" stroke="#333" stroke-width="1.1"/><ellipse cx="11" cy="2" rx="10" ry="3.2" fill="#d9652f" stroke="#333" stroke-width="1.1"/><path d="M14.5 23.2 V27.2 A9.5 3.2 0 0 0 33.5 27.2 V23.2" fill="#fff" stroke="#333" stroke-width="1.1"/><path d="M14.5 19.0 V23.0 A9.5 3.2 0 0 0 33.5 23.0 V19.0" fill="#fff" stroke="#333" stroke-width="1.1"/><ellipse cx="24" cy="19" rx="9.5" ry="3.2" fill="#d9652f" stroke="#333" stroke-width="1.1"/></svg>
<svg style="position:absolute;left:16px;top:355px" width="44" height="36" viewBox="0 0 44 36"><path d="M16.3 21.4 V7.2 H37.2 V26.7" fill="none" stroke="#555" stroke-width="1.4" stroke-linejoin="round"/><path d="M16.3 12.8 H11 Q5.6 12.8 5.6 18.2 V28 H9.9 M5.6 25.4 H9.9" fill="none" stroke="#444" stroke-width="1.3"/><path d="M13.5 15.5 Q8.5 15.5 8.5 20.5" fill="none" stroke="#555" stroke-width="1.2"/><path d="M22 27.3 H25" stroke="#777" stroke-width="1.3"/><circle cx="16" cy="27.3" r="3.4" fill="#db6733" stroke="#333" stroke-width="0.9"/><circle cx="31" cy="27.3" r="3.4" fill="#db6733" stroke="#333" stroke-width="0.9"/></svg>
<svg style="position:absolute;left:21px;top:408px" width="34" height="33" viewBox="0 0 34 33"><rect x="1" y="14" width="15" height="18" fill="#fff" stroke="#333" stroke-width="1.3"/><rect x="15" y="1" width="18" height="31" fill="#fff" stroke="#333" stroke-width="1.3"/><rect x="19" y="4.5" width="4" height="4" fill="none" stroke="#333" stroke-width="1"/><rect x="25.5" y="4.5" width="4" height="4" fill="none" stroke="#333" stroke-width="1"/><rect x="19" y="11" width="4" height="4" fill="none" stroke="#333" stroke-width="1"/><rect x="25.5" y="11" width="4" height="4" fill="none" stroke="#333" stroke-width="1"/><rect x="19" y="17.5" width="4" height="4" fill="none" stroke="#333" stroke-width="1"/><rect x="25.5" y="17.5" width="4" height="4" fill="none" stroke="#333" stroke-width="1"/><rect x="5" y="23" width="5" height="9" fill="#d9652f"/><rect x="21" y="23" width="5" height="9" fill="#d9652f"/></svg>
<svg style="position:absolute;left:16px;top:455px" width="30" height="40" viewBox="0 0 30 40"><path d="M5.4 10.8 L25.9 5.4 V30.7 L9 35 L5.4 33.3 Z" fill="#fff" stroke="#444" stroke-width="1.2" stroke-linejoin="round"/><path d="M5.4 10.8 L9 12.5 L25.9 8 M9 12.5 V35" fill="none" stroke="#444" stroke-width="1.2"/><path d="M7.2 11.6 L25.9 6.7" stroke="#888" stroke-width="0.7"/><path d="M13.5 20 L18 17.5 L22.5 20 V26 L18 28.5 L13.5 26 Z" fill="#fff" stroke="#444" stroke-width="1"/><path d="M13.5 20 L18 17.5 L22.5 20 L18 22.5 Z" fill="#e0652e"/><path d="M18 22.5 V28.5" stroke="#444" stroke-width="0.9"/></svg>
<svg style="position:absolute;left:21px;top:509px" width="28" height="32" viewBox="0 0 28 32"><path d="M1.2 3 V30 H20" fill="none" stroke="#777" stroke-width="2.6"/><path d="M3.5 1 H19 L26 8 V28.5 H3.5 Z" fill="#fff" stroke="#555" stroke-width="1.2" stroke-linejoin="round"/><path d="M19 1 V8 H26" fill="none" stroke="#555" stroke-width="1.1"/><rect x="8.5" y="10.5" width="12.5" height="7.5" fill="none" stroke="#ea9a7a" stroke-width="1.3"/><path d="M8.5 21 H21 M8.5 24 H21" stroke="#ea9a7a" stroke-width="1.1"/></svg>
<div style="position:absolute;left:76px;top:140px;width:1784px;height:608px;background:#f3f3f3"></div>
<div style="position:absolute;left:81px;top:145px;width:288px;height:603px;background:#ffffff;border:1px solid #8a8a8a;border-bottom:none;box-sizing:border-box"></div>
<div style="position:absolute;left:82px;top:146px;width:286px;height:21px;background:#f0f0f0;border-bottom:1px solid #a8a8a8;box-sizing:border-box"></div>
<div class="t" style="left:85.5px;top:148.9px;line-height:16px;font-size:12px;color:#1e1e1e;font-weight:normal;transform:scaleX(0.9569);transform-origin:left center;">Navigation pane</div>
<svg style="position:absolute;left:354px;top:151px" width="9" height="12" viewBox="0 0 9 12"><path d="M3 1 H6 V6.5 L7.5 8 H1.5 L3 6.5 Z" fill="#111" stroke="#111" stroke-width="1"/><path d="M3.6 2 V6" stroke="#fff" stroke-width="0.8"/><path d="M4.5 8 V11.5" stroke="#111" stroke-width="1.2"/></svg>
<div style="position:absolute;left:87px;top:172px;width:276px;height:22px;background:#fff;border:1px solid #1a1a1a;box-sizing:border-box"></div>
<svg style="position:absolute;left:284px;top:179px" width="8" height="5" viewBox="0 0 8 5"><path d="M1 1 L4 4 L7 1" fill="none" stroke="#555" stroke-width="1"/></svg>
<svg style="position:absolute;left:308px;top:174px" width="19" height="19" viewBox="0 0 19 19"><circle cx="7.5" cy="7" r="5.6" fill="none" stroke="#333" stroke-width="1.1"/><path d="M11.6 11.1 L17 16.5" stroke="#333" stroke-width="1.2"/></svg>
<svg style="position:absolute;left:338px;top:174px" width="18" height="18" viewBox="0 0 18 18"><path d="M1 1 L17 17 M17 1 L1 17" stroke="#222" stroke-width="1.1"/></svg>
<div class="t" style="left:328px;top:195.0px;line-height:16px;font-size:12px;color:#1e1e1e;font-weight:normal;transform:scaleX(0.9205);transform-origin:left center;text-decoration:underline;">Search</div>
<div style="position:absolute;left:82px;top:217px;width:286px;height:22px;background:#f0f0f0;border:1px solid #adadad;border-left:2px solid #adadad;box-sizing:border-box"></div>
<div class="t" style="left:-82px;width:600px;text-align:center;top:220.5px;line-height:16px;font-size:12px;color:#1e1e1e;font-weight:normal;transform:scaleX(1.0229);transform-origin:center center;">Add filter...</div>
<svg style="position:absolute;left:357px;top:226px" width="6" height="4" viewBox="0 0 6 4"><path d="M0 0 H6 L3 3.5 Z" fill="#111"/></svg>
<div style="position:absolute;left:83px;top:266px;width:285px;height:1px;background:#a8a8a8"></div>
<div style="position:absolute;left:149px;top:246px;width:47px;height:21px;background:linear-gradient(#f3f3f3,#e6e6e6);border:1px solid #acacac;box-sizing:border-box"></div>
<div style="position:absolute;left:83px;top:244px;width:66px;height:23px;background:#fff;border:1px solid #acacac;border-bottom:none;box-sizing:border-box"></div>
<div class="t" style="left:90px;top:248.0px;line-height:16px;font-size:12px;color:#1e1e1e;font-weight:normal;transform:scaleX(0.9802);transform-origin:left center;">Functions</div>
<div class="t" style="left:153px;top:249.5px;line-height:16px;font-size:12px;color:#1e1e1e;font-weight:normal;transform:scaleX(0.9910);transform-origin:left center;">Groups</div>
<svg style="position:absolute;left:91px;top:275px" width="8" height="7" viewBox="0 0 8 7"><path d="M7 0.5 V6 H0.5 Z" fill="#444"/></svg>
<div class="t" style="left:107px;top:271.5px;line-height:16px;font-size:12px;color:#1e1e1e;font-weight:normal;transform:scaleX(0.9687);transform-origin:left center;">Demo Database</div>
<svg style="position:absolute;left:110px;top:294px" width="8" height="7" viewBox="0 0 8 7"><path d="M7 0.5 V6 H0.5 Z" fill="#444"/></svg>
<div class="t" style="left:125.7px;top:290.5px;line-height:16px;font-size:12px;color:#1e1e1e;font-weight:normal;transform:scaleX(1.0268);transform-origin:left center;">A - Building A</div>
<svg style="position:absolute;left:131px;top:312.5px" width="7" height="9" viewBox="0 0 7 9"><path d="M1 0.8 L5.5 4.3 L1 7.8 Z" fill="#fff" stroke="#9a9a9a" stroke-width="1"/></svg>
<div class="t" style="left:145px;top:309.5px;line-height:16px;font-size:12px;color:#1e1e1e;font-weight:normal;transform:scaleX(0.9030);transform-origin:left center;">A.00 - LEVEL 0</div>
<svg style="position:absolute;left:131px;top:331.5px" width="7" height="9" viewBox="0 0 7 9"><path d="M1 0.8 L5.5 4.3 L1 7.8 Z" fill="#fff" stroke="#9a9a9a" stroke-width="1"/></svg>
<div class="t" style="left:145px;top:328.5px;line-height:16px;font-size:12px;color:#1e1e1e;font-weight:normal;transform:scaleX(0.9030);transform-origin:left center;">A.01 - LEVEL 1</div>
<svg style="position:absolute;left:131px;top:350.5px" width="7" height="9" viewBox="0 0 7 9"><path d="M1 0.8 L5.5 4.3 L1 7.8 Z" fill="#fff" stroke="#9a9a9a" stroke-width="1"/></svg>
<div class="t" style="left:145px;top:347.5px;line-height:16px;font-size:12px;color:#1e1e1e;font-weight:normal;transform:scaleX(0.9030);transform-origin:left center;">A.02 - LEVEL 2</div>
<svg style="position:absolute;left:131px;top:369.5px" width="7" height="9" viewBox="0 0 7 9"><path d="M1 0.8 L5.5 4.3 L1 7.8 Z" fill="#fff" stroke="#9a9a9a" stroke-width="1"/></svg>
<div class="t" style="left:145px;top:366.5px;line-height:16px;font-size:12px;color:#1e1e1e;font-weight:normal;transform:scaleX(0.9030);transform-origin:left center;">A.03 - LEVEL 3</div>
<svg style="position:absolute;left:131px;top:388.5px" width="7" height="9" viewBox="0 0 7 9"><path d="M1 0.8 L5.5 4.3 L1 7.8 Z" fill="#fff" stroke="#9a9a9a" stroke-width="1"/></svg>
<div class="t" style="left:145px;top:385.5px;line-height:16px;font-size:12px;color:#1e1e1e;font-weight:normal;transform:scaleX(0.9030);transform-origin:left center;">A.04 - LEVEL 4</div>
<svg style="position:absolute;left:131px;top:407.5px" width="7" height="9" viewBox="0 0 7 9"><path d="M1 0.8 L5.5 4.3 L1 7.8 Z" fill="#fff" stroke="#9a9a9a" stroke-width="1"/></svg>
<div class="t" style="left:145px;top:404.5px;line-height:16px;font-size:12px;color:#1e1e1e;font-weight:normal;transform:scaleX(0.9030);transform-origin:left center;">A.05 - LEVEL 5</div>
<svg style="position:absolute;left:131px;top:426.5px" width="7" height="9" viewBox="0 0 7 9"><path d="M1 0.8 L5.5 4.3 L1 7.8 Z" fill="#fff" stroke="#9a9a9a" stroke-width="1"/></svg>
<div class="t" style="left:145px;top:423.5px;line-height:16px;font-size:12px;color:#1e1e1e;font-weight:normal;transform:scaleX(0.9030);transform-origin:left center;">A.06 - LEVEL 6</div>
<svg style="position:absolute;left:131px;top:445.5px" width="7" height="9" viewBox="0 0 7 9"><path d="M1 0.8 L5.5 4.3 L1 7.8 Z" fill="#fff" stroke="#9a9a9a" stroke-width="1"/></svg>
<div class="t" style="left:145px;top:442.5px;line-height:16px;font-size:12px;color:#1e1e1e;font-weight:normal;transform:scaleX(0.9030);transform-origin:left center;">A.07 - LEVEL 7</div>
<svg style="position:absolute;left:131px;top:464.5px" width="7" height="9" viewBox="0 0 7 9"><path d="M1 0.8 L5.5 4.3 L1 7.8 Z" fill="#fff" stroke="#9a9a9a" stroke-width="1"/></svg>
<div class="t" style="left:145px;top:461.5px;line-height:16px;font-size:12px;color:#1e1e1e;font-weight:normal;transform:scaleX(0.9030);transform-origin:left center;">A.08 - LEVEL 8</div>
<svg style="position:absolute;left:131px;top:483.5px" width="7" height="9" viewBox="0 0 7 9"><path d="M1 0.8 L5.5 4.3 L1 7.8 Z" fill="#fff" stroke="#9a9a9a" stroke-width="1"/></svg>
<div class="t" style="left:145px;top:480.5px;line-height:16px;font-size:12px;color:#1e1e1e;font-weight:normal;transform:scaleX(0.9030);transform-origin:left center;">A.10 - LEVEL 10</div>
<svg style="position:absolute;left:131px;top:502.5px" width="7" height="9" viewBox="0 0 7 9"><path d="M1 0.8 L5.5 4.3 L1 7.8 Z" fill="#fff" stroke="#9a9a9a" stroke-width="1"/></svg>
<div class="t" style="left:145px;top:499.5px;line-height:16px;font-size:12px;color:#1e1e1e;font-weight:normal;transform:scaleX(0.9030);transform-origin:left center;">A.11 - LEVEL 11</div>
<div style="position:absolute;left:142px;top:517px;width:79px;height:18px;background:#e6e6e6;border:1px solid #d2d2d2;border-radius:2px;box-sizing:border-box"></div>
<svg style="position:absolute;left:129px;top:522px" width="8" height="7" viewBox="0 0 8 7"><path d="M7 0.5 V6 H0.5 Z" fill="#444"/></svg>
<div class="t" style="left:145px;top:518.5px;line-height:16px;font-size:12px;color:#1e1e1e;font-weight:normal;transform:scaleX(0.9067);transform-origin:left center;">A.12 - LEVEL 9</div>
<div class="t" style="left:164px;top:537.5px;line-height:16px;font-size:12px;color:#1e1e1e;font-weight:normal;transform:scaleX(0.9575);transform-origin:left center;">A.12.01 - Balcony</div>
<div class="t" style="left:164px;top:556.5px;line-height:16px;font-size:12px;color:#1e1e1e;font-weight:normal;transform:scaleX(0.9487);transform-origin:left center;">A.12.02 - T&amp;E</div>
<div class="t" style="left:164px;top:575.5px;line-height:16px;font-size:12px;color:#1e1e1e;font-weight:normal;transform:scaleX(0.9785);transform-origin:left center;">A.12.03 - Unit</div>
<div style="position:absolute;left:125px;top:513px;width:145px;height:88px;border:3px solid #f5393d;box-sizing:border-box;box-shadow:0 2px 4px rgba(0,0,0,0.35), inset 0 2px 4px rgba(0,0,0,0.3)"></div>
<div style="position:absolute;left:373px;top:166px;width:1019px;height:582px;background:#ffffff;border:1px solid #8c8c8c;border-bottom:none;box-sizing:border-box"></div>
<div style="position:absolute;left:373px;top:143px;width:134px;height:24px;background:linear-gradient(#fcfcfc,#f6f6f6);border:1px solid #8c8c8c;border-bottom:none;box-sizing:border-box"></div>
<div style="position:absolute;left:374px;top:166px;width:132px;height:1px;background:#f8f8f8"></div>
<div class="t" style="left:379.4px;top:149.2px;line-height:16px;font-size:12px;color:#1e1e1e;font-weight:normal;transform:scaleX(0.9671);transform-origin:left center;">Rooms [A.12 - LEVEL 9]</div>
<div style="position:absolute;left:374px;top:167px;width:1017px;height:20px;background:linear-gradient(#ffffff,#f7f8f9)"></div>
<div style="position:absolute;left:476px;top:168px;width:1px;height:19px;background:#e2e3e4"></div>
<div style="position:absolute;left:576px;top:168px;width:1px;height:19px;background:#e2e3e4"></div>
<div style="position:absolute;left:771px;top:168px;width:1px;height:19px;background:#e2e3e4"></div>
<div style="position:absolute;left:831px;top:168px;width:1px;height:19px;background:#e2e3e4"></div>
<div style="position:absolute;left:891px;top:168px;width:1px;height:19px;background:#e2e3e4"></div>
<div style="position:absolute;left:995px;top:168px;width:1px;height:19px;background:#e2e3e4"></div>
<div style="position:absolute;left:1095px;top:168px;width:1px;height:19px;background:#e2e3e4"></div>
<div style="position:absolute;left:1195px;top:168px;width:1px;height:19px;background:#e2e3e4"></div>
<div style="position:absolute;left:1295px;top:168px;width:1px;height:19px;background:#e2e3e4"></div>
<div style="position:absolute;left:1391px;top:167px;width:1px;height:20px;background:#8c8c8c"></div>
<div class="t" style="left:379.4px;top:170.0px;line-height:16px;font-size:12px;color:#1e1e1e;font-weight:normal;transform:scaleX(0.9777);transform-origin:left center;">Room Function #:</div>
<div class="t" style="left:479.5px;top:170.0px;line-height:16px;font-size:12px;color:#1e1e1e;font-weight:normal;transform:scaleX(0.9997);transform-origin:left center;">Room Number</div>
<div class="t" style="left:579.5px;top:170.0px;line-height:16px;font-size:12px;color:#1e1e1e;font-weight:normal;transform:scaleX(1.0013);transform-origin:left center;">Room name and room description</div>
<div class="t" style="right:1032.2px;top:170.0px;line-height:16px;font-size:12px;color:#1e1e1e;font-weight:normal;transform:scaleX(0.9343);transform-origin:right center;">Progra...</div>
<div class="t" style="left:837px;top:170.0px;line-height:16px;font-size:12px;color:#1e1e1e;font-weight:normal;transform:scaleX(0.9346);transform-origin:left center;">Designe...</div>
<div class="t" style="left:894.5px;top:170.0px;line-height:16px;font-size:12px;color:#1e1e1e;font-weight:normal;transform:scaleX(0.9063);transform-origin:left center;">RDS status</div>
<div class="t" style="left:998px;top:170.0px;line-height:16px;font-size:12px;color:#1e1e1e;font-weight:normal;transform:scaleX(0.9109);transform-origin:left center;">FF&amp;E: Status</div>
<div class="t" style="left:1098px;top:170.0px;line-height:16px;font-size:12px;color:#1e1e1e;font-weight:normal;transform:scaleX(1.0105);transform-origin:left center;">Doors+Window...</div>
<div class="t" style="left:1198px;top:170.0px;line-height:16px;font-size:12px;color:#1e1e1e;font-weight:normal;transform:scaleX(0.9312);transform-origin:left center;">Finishes: Status</div>
<div class="t" style="left:1298px;top:170.0px;line-height:16px;font-size:12px;color:#1e1e1e;font-weight:normal;transform:scaleX(0.9227);transform-origin:left center;">Services: Status</div>
<div class="t" style="left:381px;top:189.5px;line-height:16px;font-size:12px;color:#1e1e1e;font-weight:normal;transform:scaleX(0.9270);transform-origin:left center;">A.12.01.001</div>
<div class="t" style="left:481px;top:189.5px;line-height:16px;font-size:12px;color:#1e1e1e;font-weight:normal;transform:scaleX(0.9470);transform-origin:left center;">L9-006</div>
<div class="t" style="left:581px;top:189.5px;line-height:16px;font-size:12px;color:#1e1e1e;font-weight:normal;transform:scaleX(0.9000);transform-origin:left center;">BALCONY 3</div>
<div class="t" style="right:1036.3px;top:189.5px;line-height:16px;font-size:12px;color:#1e1e1e;font-weight:normal;transform:scaleX(0.9200);transform-origin:right center;">10.00</div>
<div class="t" style="right:976px;top:189.5px;line-height:16px;font-size:12px;color:#1e1e1e;font-weight:normal;transform:scaleX(0.9300);transform-origin:right center;">10.24</div>
<div class="t" style="left:896.5px;top:189.5px;line-height:16px;font-size:12px;color:#1e1e1e;font-weight:normal;transform:scaleX(0.9994);transform-origin:left center;">Not created</div>
<div class="t" style="left:1000px;top:189.5px;line-height:16px;font-size:12px;color:#1e1e1e;font-weight:normal;transform:scaleX(0.9994);transform-origin:left center;">Not created</div>
<div class="t" style="left:1100px;top:189.5px;line-height:16px;font-size:12px;color:#1e1e1e;font-weight:normal;transform:scaleX(0.9994);transform-origin:left center;">Not created</div>
<div class="t" style="left:1200.5px;top:189.5px;line-height:16px;font-size:12px;color:#1e1e1e;font-weight:normal;transform:scaleX(0.9994);transform-origin:left center;">Not created</div>
<div class="t" style="left:1300px;top:189.5px;line-height:16px;font-size:12px;color:#1e1e1e;font-weight:normal;transform:scaleX(0.9994);transform-origin:left center;">Not created</div>
<div class="t" style="left:381px;top:208.5px;line-height:16px;font-size:12px;color:#1e1e1e;font-weight:normal;transform:scaleX(0.9270);transform-origin:left center;">A.12.01.002</div>
<div class="t" style="left:481px;top:208.5px;line-height:16px;font-size:12px;color:#1e1e1e;font-weight:normal;transform:scaleX(0.9470);transform-origin:left center;">L9-004</div>
<div class="t" style="left:581px;top:208.5px;line-height:16px;font-size:12px;color:#1e1e1e;font-weight:normal;transform:scaleX(0.9000);transform-origin:left center;">BALCONY 1</div>
<div class="t" style="right:1036.3px;top:208.5px;line-height:16px;font-size:12px;color:#1e1e1e;font-weight:normal;transform:scaleX(0.9200);transform-origin:right center;">9.00</div>
<div class="t" style="right:976px;top:208.5px;line-height:16px;font-size:12px;color:#1e1e1e;font-weight:normal;transform:scaleX(0.9300);transform-origin:right center;">9.17</div>
<div class="t" style="left:896.5px;top:208.5px;line-height:16px;font-size:12px;color:#1e1e1e;font-weight:normal;transform:scaleX(0.9994);transform-origin:left center;">Not created</div>
<div class="t" style="left:1000px;top:208.5px;line-height:16px;font-size:12px;color:#1e1e1e;font-weight:normal;transform:scaleX(0.9994);transform-origin:left center;">Not created</div>
<div class="t" style="left:1100px;top:208.5px;line-height:16px;font-size:12px;color:#1e1e1e;font-weight:normal;transform:scaleX(0.9994);transform-origin:left center;">Not created</div>
<div class="t" style="left:1200.5px;top:208.5px;line-height:16px;font-size:12px;color:#1e1e1e;font-weight:normal;transform:scaleX(0.9994);transform-origin:left center;">Not created</div>
<div class="t" style="left:1300px;top:208.5px;line-height:16px;font-size:12px;color:#1e1e1e;font-weight:normal;transform:scaleX(0.9994);transform-origin:left center;">Not created</div>
<div class="t" style="left:381px;top:227.5px;line-height:16px;font-size:12px;color:#1e1e1e;font-weight:normal;transform:scaleX(0.9270);transform-origin:left center;">A.12.01.003</div>
<div class="t" style="left:481px;top:227.5px;line-height:16px;font-size:12px;color:#1e1e1e;font-weight:normal;transform:scaleX(0.9470);transform-origin:left center;">L9-005</div>
<div class="t" style="left:581px;top:227.5px;line-height:16px;font-size:12px;color:#1e1e1e;font-weight:normal;transform:scaleX(0.9000);transform-origin:left center;">BALCONY 2</div>
<div class="t" style="right:1036.3px;top:227.5px;line-height:16px;font-size:12px;color:#1e1e1e;font-weight:normal;transform:scaleX(0.9200);transform-origin:right center;">5.00</div>
<div class="t" style="right:976px;top:227.5px;line-height:16px;font-size:12px;color:#1e1e1e;font-weight:normal;transform:scaleX(0.9300);transform-origin:right center;">4.34</div>
<div class="t" style="left:896.5px;top:227.5px;line-height:16px;font-size:12px;color:#1e1e1e;font-weight:normal;transform:scaleX(0.9994);transform-origin:left center;">Not created</div>
<div class="t" style="left:1000px;top:227.5px;line-height:16px;font-size:12px;color:#1e1e1e;font-weight:normal;transform:scaleX(0.9994);transform-origin:left center;">Not created</div>
<div class="t" style="left:1100px;top:227.5px;line-height:16px;font-size:12px;color:#1e1e1e;font-weight:normal;transform:scaleX(0.9994);transform-origin:left center;">Not created</div>
<div class="t" style="left:1200.5px;top:227.5px;line-height:16px;font-size:12px;color:#1e1e1e;font-weight:normal;transform:scaleX(0.9994);transform-origin:left center;">Not created</div>
<div class="t" style="left:1300px;top:227.5px;line-height:16px;font-size:12px;color:#1e1e1e;font-weight:normal;transform:scaleX(0.9994);transform-origin:left center;">Not created</div>
<div class="t" style="left:381px;top:246.5px;line-height:16px;font-size:12px;color:#1e1e1e;font-weight:normal;transform:scaleX(0.9270);transform-origin:left center;">A.12.02.001</div>
<div class="t" style="left:481px;top:246.5px;line-height:16px;font-size:12px;color:#1e1e1e;font-weight:normal;transform:scaleX(0.9470);transform-origin:left center;">L9-008</div>
<div class="t" style="left:581px;top:246.5px;line-height:16px;font-size:12px;color:#1e1e1e;font-weight:normal;transform:scaleX(0.9000);transform-origin:left center;">LIFT</div>
<div class="t" style="right:1036.3px;top:246.5px;line-height:16px;font-size:12px;color:#1e1e1e;font-weight:normal;transform:scaleX(0.9200);transform-origin:right center;">6.00</div>
<div class="t" style="right:976px;top:246.5px;line-height:16px;font-size:12px;color:#1e1e1e;font-weight:normal;transform:scaleX(0.9300);transform-origin:right center;">6.29</div>
<div class="t" style="left:896.5px;top:246.5px;line-height:16px;font-size:12px;color:#1e1e1e;font-weight:normal;transform:scaleX(0.9994);transform-origin:left center;">Not created</div>
<div class="t" style="left:1000px;top:246.5px;line-height:16px;font-size:12px;color:#1e1e1e;font-weight:normal;transform:scaleX(0.9994);transform-origin:left center;">Not created</div>
<div class="t" style="left:1100px;top:246.5px;line-height:16px;font-size:12px;color:#1e1e1e;font-weight:normal;transform:scaleX(0.9994);transform-origin:left center;">Not created</div>
<div class="t" style="left:1200.5px;top:246.5px;line-height:16px;font-size:12px;color:#1e1e1e;font-weight:normal;transform:scaleX(0.9994);transform-origin:left center;">Not created</div>
<div class="t" style="left:1300px;top:246.5px;line-height:16px;font-size:12px;color:#1e1e1e;font-weight:normal;transform:scaleX(0.9994);transform-origin:left center;">Not created</div>
<div class="t" style="left:381px;top:265.5px;line-height:16px;font-size:12px;color:#1e1e1e;font-weight:normal;transform:scaleX(0.9270);transform-origin:left center;">A.12.02.002</div>
<div class="t" style="left:481px;top:265.5px;line-height:16px;font-size:12px;color:#1e1e1e;font-weight:normal;transform:scaleX(0.9470);transform-origin:left center;">L9-009</div>
<div class="t" style="left:581px;top:265.5px;line-height:16px;font-size:12px;color:#1e1e1e;font-weight:normal;transform:scaleX(0.9000);transform-origin:left center;">STAIR</div>
<div class="t" style="right:1036.3px;top:265.5px;line-height:16px;font-size:12px;color:#1e1e1e;font-weight:normal;transform:scaleX(0.9200);transform-origin:right center;">18.00</div>
<div class="t" style="right:976px;top:265.5px;line-height:16px;font-size:12px;color:#1e1e1e;font-weight:normal;transform:scaleX(0.9300);transform-origin:right center;">17.46</div>
<div class="t" style="left:896.5px;top:265.5px;line-height:16px;font-size:12px;color:#1e1e1e;font-weight:normal;transform:scaleX(0.9994);transform-origin:left center;">Not created</div>
<div class="t" style="left:1000px;top:265.5px;line-height:16px;font-size:12px;color:#1e1e1e;font-weight:normal;transform:scaleX(0.9994);transform-origin:left center;">Not created</div>
<div class="t" style="left:1100px;top:265.5px;line-height:16px;font-size:12px;color:#1e1e1e;font-weight:normal;transform:scaleX(0.9994);transform-origin:left center;">Not created</div>
<div class="t" style="left:1200.5px;top:265.5px;line-height:16px;font-size:12px;color:#1e1e1e;font-weight:normal;transform:scaleX(0.9994);transform-origin:left center;">Not created</div>
<div class="t" style="left:1300px;top:265.5px;line-height:16px;font-size:12px;color:#1e1e1e;font-weight:normal;transform:scaleX(0.9994);transform-origin:left center;">Not created</div>
<div class="t" style="left:381px;top:284.5px;line-height:16px;font-size:12px;color:#1e1e1e;font-weight:normal;transform:scaleX(0.9270);transform-origin:left center;">A.12.02.003</div>
<div class="t" style="left:481px;top:284.5px;line-height:16px;font-size:12px;color:#1e1e1e;font-weight:normal;transform:scaleX(0.9470);transform-origin:left center;">L9-007</div>
<div class="t" style="left:581px;top:284.5px;line-height:16px;font-size:12px;color:#1e1e1e;font-weight:normal;transform:scaleX(0.9000);transform-origin:left center;">LIFT</div>
<div class="t" style="right:1036.3px;top:284.5px;line-height:16px;font-size:12px;color:#1e1e1e;font-weight:normal;transform:scaleX(0.9200);transform-origin:right center;">6.00</div>
<div class="t" style="right:976px;top:284.5px;line-height:16px;font-size:12px;color:#1e1e1e;font-weight:normal;transform:scaleX(0.9300);transform-origin:right center;">6.34</div>
<div class="t" style="left:896.5px;top:284.5px;line-height:16px;font-size:12px;color:#1e1e1e;font-weight:normal;transform:scaleX(0.9994);transform-origin:left center;">Not created</div>
<div class="t" style="left:1000px;top:284.5px;line-height:16px;font-size:12px;color:#1e1e1e;font-weight:normal;transform:scaleX(0.9994);transform-origin:left center;">Not created</div>
<div class="t" style="left:1100px;top:284.5px;line-height:16px;font-size:12px;color:#1e1e1e;font-weight:normal;transform:scaleX(0.9994);transform-origin:left center;">Not created</div>
<div class="t" style="left:1200.5px;top:284.5px;line-height:16px;font-size:12px;color:#1e1e1e;font-weight:normal;transform:scaleX(0.9994);transform-origin:left center;">Not created</div>
<div class="t" style="left:1300px;top:284.5px;line-height:16px;font-size:12px;color:#1e1e1e;font-weight:normal;transform:scaleX(0.9994);transform-origin:left center;">Not created</div>
<div class="t" style="left:381px;top:303.5px;line-height:16px;font-size:12px;color:#1e1e1e;font-weight:normal;transform:scaleX(0.9270);transform-origin:left center;">A.12.02.004</div>
<div class="t" style="left:481px;top:303.5px;line-height:16px;font-size:12px;color:#1e1e1e;font-weight:normal;transform:scaleX(0.9470);transform-origin:left center;">L9-014</div>
<div class="t" style="left:581px;top:303.5px;line-height:16px;font-size:12px;color:#1e1e1e;font-weight:normal;transform:scaleX(0.9000);transform-origin:left center;">CORRIDOR</div>
<div class="t" style="right:1036.3px;top:303.5px;line-height:16px;font-size:12px;color:#1e1e1e;font-weight:normal;transform:scaleX(0.9200);transform-origin:right center;">0.00</div>
<div class="t" style="right:976px;top:303.5px;line-height:16px;font-size:12px;color:#1e1e1e;font-weight:normal;transform:scaleX(0.9300);transform-origin:right center;">27.76</div>
<div class="t" style="left:896.5px;top:303.5px;line-height:16px;font-size:12px;color:#1e1e1e;font-weight:normal;transform:scaleX(0.9994);transform-origin:left center;">Not created</div>
<div class="t" style="left:1000px;top:303.5px;line-height:16px;font-size:12px;color:#1e1e1e;font-weight:normal;transform:scaleX(0.9994);transform-origin:left center;">Not created</div>
<div class="t" style="left:1100px;top:303.5px;line-height:16px;font-size:12px;color:#1e1e1e;font-weight:normal;transform:scaleX(0.9994);transform-origin:left center;">Not created</div>
<div class="t" style="left:1200.5px;top:303.5px;line-height:16px;font-size:12px;color:#1e1e1e;font-weight:normal;transform:scaleX(0.9994);transform-origin:left center;">Not created</div>
<div class="t" style="left:1300px;top:303.5px;line-height:16px;font-size:12px;color:#1e1e1e;font-weight:normal;transform:scaleX(0.9994);transform-origin:left center;">Not created</div>
<div class="t" style="left:381px;top:321.5px;line-height:16px;font-size:12px;color:#1e1e1e;font-weight:normal;transform:scaleX(0.9270);transform-origin:left center;">A.12.02.005</div>
<div class="t" style="left:481px;top:321.5px;line-height:16px;font-size:12px;color:#1e1e1e;font-weight:normal;transform:scaleX(0.9470);transform-origin:left center;">L9-013</div>
<div class="t" style="left:581px;top:321.5px;line-height:16px;font-size:12px;color:#1e1e1e;font-weight:normal;transform:scaleX(0.9000);transform-origin:left center;">RISER</div>
<div class="t" style="right:1036.3px;top:321.5px;line-height:16px;font-size:12px;color:#1e1e1e;font-weight:normal;transform:scaleX(0.9200);transform-origin:right center;">3.00</div>
<div class="t" style="right:976px;top:321.5px;line-height:16px;font-size:12px;color:#1e1e1e;font-weight:normal;transform:scaleX(0.9300);transform-origin:right center;">3.58</div>
<div class="t" style="left:896.5px;top:321.5px;line-height:16px;font-size:12px;color:#1e1e1e;font-weight:normal;transform:scaleX(0.9994);transform-origin:left center;">Not created</div>
<div class="t" style="left:1000px;top:321.5px;line-height:16px;font-size:12px;color:#1e1e1e;font-weight:normal;transform:scaleX(0.9994);transform-origin:left center;">Not created</div>
<div class="t" style="left:1100px;top:321.5px;line-height:16px;font-size:12px;color:#1e1e1e;font-weight:normal;transform:scaleX(0.9994);transform-origin:left center;">Not created</div>
<div class="t" style="left:1200.5px;top:321.5px;line-height:16px;font-size:12px;color:#1e1e1e;font-weight:normal;transform:scaleX(0.9994);transform-origin:left center;">Not created</div>
<div class="t" style="left:1300px;top:321.5px;line-height:16px;font-size:12px;color:#1e1e1e;font-weight:normal;transform:scaleX(0.9994);transform-origin:left center;">Not created</div>
<div class="t" style="left:381px;top:340.5px;line-height:16px;font-size:12px;color:#1e1e1e;font-weight:normal;transform:scaleX(0.9270);transform-origin:left center;">A.12.02.006</div>
<div class="t" style="left:481px;top:340.5px;line-height:16px;font-size:12px;color:#1e1e1e;font-weight:normal;transform:scaleX(0.9470);transform-origin:left center;">L9-012</div>
<div class="t" style="left:581px;top:340.5px;line-height:16px;font-size:12px;color:#1e1e1e;font-weight:normal;transform:scaleX(0.9000);transform-origin:left center;">RISER</div>
<div class="t" style="right:1036.3px;top:340.5px;line-height:16px;font-size:12px;color:#1e1e1e;font-weight:normal;transform:scaleX(0.9200);transform-origin:right center;">2.00</div>
<div class="t" style="right:976px;top:340.5px;line-height:16px;font-size:12px;color:#1e1e1e;font-weight:normal;transform:scaleX(0.9300);transform-origin:right center;">1.68</div>
<div class="t" style="left:896.5px;top:340.5px;line-height:16px;font-size:12px;color:#1e1e1e;font-weight:normal;transform:scaleX(0.9994);transform-origin:left center;">Not created</div>
<div class="t" style="left:1000px;top:340.5px;line-height:16px;font-size:12px;color:#1e1e1e;font-weight:normal;transform:scaleX(0.9994);transform-origin:left center;">Not created</div>
<div class="t" style="left:1100px;top:340.5px;line-height:16px;font-size:12px;color:#1e1e1e;font-weight:normal;transform:scaleX(0.9994);transform-origin:left center;">Not created</div>
<div class="t" style="left:1200.5px;top:340.5px;line-height:16px;font-size:12px;color:#1e1e1e;font-weight:normal;transform:scaleX(0.9994);transform-origin:left center;">Not created</div>
<div class="t" style="left:1300px;top:340.5px;line-height:16px;font-size:12px;color:#1e1e1e;font-weight:normal;transform:scaleX(0.9994);transform-origin:left center;">Not created</div>
<div class="t" style="left:381px;top:359.5px;line-height:16px;font-size:12px;color:#1e1e1e;font-weight:normal;transform:scaleX(0.9270);transform-origin:left center;">A.12.02.007</div>
<div class="t" style="left:481px;top:359.5px;line-height:16px;font-size:12px;color:#1e1e1e;font-weight:normal;transform:scaleX(0.9470);transform-origin:left center;">L9-011</div>
<div class="t" style="left:581px;top:359.5px;line-height:16px;font-size:12px;color:#1e1e1e;font-weight:normal;transform:scaleX(0.9000);transform-origin:left center;">RISER</div>
<div class="t" style="right:1036.3px;top:359.5px;line-height:16px;font-size:12px;color:#1e1e1e;font-weight:normal;transform:scaleX(0.9200);transform-origin:right center;">2.00</div>
<div class="t" style="right:976px;top:359.5px;line-height:16px;font-size:12px;color:#1e1e1e;font-weight:normal;transform:scaleX(0.9300);transform-origin:right center;">1.15</div>
<div class="t" style="left:896.5px;top:359.5px;line-height:16px;font-size:12px;color:#1e1e1e;font-weight:normal;transform:scaleX(0.9994);transform-origin:left center;">Not created</div>
<div class="t" style="left:1000px;top:359.5px;line-height:16px;font-size:12px;color:#1e1e1e;font-weight:normal;transform:scaleX(0.9994);transform-origin:left center;">Not created</div>
<div class="t" style="left:1100px;top:359.5px;line-height:16px;font-size:12px;color:#1e1e1e;font-weight:normal;transform:scaleX(0.9994);transform-origin:left center;">Not created</div>
<div class="t" style="left:1200.5px;top:359.5px;line-height:16px;font-size:12px;color:#1e1e1e;font-weight:normal;transform:scaleX(0.9994);transform-origin:left center;">Not created</div>
<div class="t" style="left:1300px;top:359.5px;line-height:16px;font-size:12px;color:#1e1e1e;font-weight:normal;transform:scaleX(0.9994);transform-origin:left center;">Not created</div>
<div class="t" style="left:381px;top:378.5px;line-height:16px;font-size:12px;color:#1e1e1e;font-weight:normal;transform:scaleX(0.9270);transform-origin:left center;">A.12.03.001</div>
<div class="t" style="left:481px;top:378.5px;line-height:16px;font-size:12px;color:#1e1e1e;font-weight:normal;transform:scaleX(0.9470);transform-origin:left center;">L9-002</div>
<div class="t" style="left:581px;top:378.5px;line-height:16px;font-size:12px;color:#1e1e1e;font-weight:normal;transform:scaleX(0.9000);transform-origin:left center;">UNIT 2</div>
<div class="t" style="right:1036.3px;top:378.5px;line-height:16px;font-size:12px;color:#1e1e1e;font-weight:normal;transform:scaleX(0.9200);transform-origin:right center;">80.00</div>
<div class="t" style="right:976px;top:378.5px;line-height:16px;font-size:12px;color:#1e1e1e;font-weight:normal;transform:scaleX(0.9300);transform-origin:right center;">76.59</div>
<div class="t" style="left:896.5px;top:378.5px;line-height:16px;font-size:12px;color:#1e1e1e;font-weight:normal;transform:scaleX(0.9994);transform-origin:left center;">Not created</div>
<div class="t" style="left:1000px;top:378.5px;line-height:16px;font-size:12px;color:#1e1e1e;font-weight:normal;transform:scaleX(0.9994);transform-origin:left center;">Not created</div>
<div class="t" style="left:1100px;top:378.5px;line-height:16px;font-size:12px;color:#1e1e1e;font-weight:normal;transform:scaleX(0.9994);transform-origin:left center;">Not created</div>
<div class="t" style="left:1200.5px;top:378.5px;line-height:16px;font-size:12px;color:#1e1e1e;font-weight:normal;transform:scaleX(0.9994);transform-origin:left center;">Not created</div>
<div class="t" style="left:1300px;top:378.5px;line-height:16px;font-size:12px;color:#1e1e1e;font-weight:normal;transform:scaleX(0.9994);transform-origin:left center;">Not created</div>
<div class="t" style="left:381px;top:397.5px;line-height:16px;font-size:12px;color:#1e1e1e;font-weight:normal;transform:scaleX(0.9270);transform-origin:left center;">A.12.03.002</div>
<div class="t" style="left:481px;top:397.5px;line-height:16px;font-size:12px;color:#1e1e1e;font-weight:normal;transform:scaleX(0.9470);transform-origin:left center;">L9-003</div>
<div class="t" style="left:581px;top:397.5px;line-height:16px;font-size:12px;color:#1e1e1e;font-weight:normal;transform:scaleX(0.9000);transform-origin:left center;">UNIT 3</div>
<div class="t" style="right:1036.3px;top:397.5px;line-height:16px;font-size:12px;color:#1e1e1e;font-weight:normal;transform:scaleX(0.9200);transform-origin:right center;">120.00</div>
<div class="t" style="right:976px;top:397.5px;line-height:16px;font-size:12px;color:#1e1e1e;font-weight:normal;transform:scaleX(0.9300);transform-origin:right center;">120.69</div>
<div class="t" style="left:896.5px;top:397.5px;line-height:16px;font-size:12px;color:#1e1e1e;font-weight:normal;transform:scaleX(0.9994);transform-origin:left center;">Not created</div>
<div class="t" style="left:1000px;top:397.5px;line-height:16px;font-size:12px;color:#1e1e1e;font-weight:normal;transform:scaleX(0.9994);transform-origin:left center;">Not created</div>
<div class="t" style="left:1100px;top:397.5px;line-height:16px;font-size:12px;color:#1e1e1e;font-weight:normal;transform:scaleX(0.9994);transform-origin:left center;">Not created</div>
<div class="t" style="left:1200.5px;top:397.5px;line-height:16px;font-size:12px;color:#1e1e1e;font-weight:normal;transform:scaleX(0.9994);transform-origin:left center;">Not created</div>
<div class="t" style="left:1300px;top:397.5px;line-height:16px;font-size:12px;color:#1e1e1e;font-weight:normal;transform:scaleX(0.9994);transform-origin:left center;">Not created</div>
<div class="t" style="left:381px;top:416.5px;line-height:16px;font-size:12px;color:#1e1e1e;font-weight:normal;transform:scaleX(0.9270);transform-origin:left center;">A.12.03.003</div>
<div class="t" style="left:481px;top:416.5px;line-height:16px;font-size:12px;color:#1e1e1e;font-weight:normal;transform:scaleX(0.9470);transform-origin:left center;">L9-001</div>
<div class="t" style="left:581px;top:416.5px;line-height:16px;font-size:12px;color:#1e1e1e;font-weight:normal;transform:scaleX(0.9000);transform-origin:left center;">UNIT 1</div>
<div class="t" style="right:1036.3px;top:416.5px;line-height:16px;font-size:12px;color:#1e1e1e;font-weight:normal;transform:scaleX(0.9200);transform-origin:right center;">80.00</div>
<div class="t" style="right:976px;top:416.5px;line-height:16px;font-size:12px;color:#1e1e1e;font-weight:normal;transform:scaleX(0.9300);transform-origin:right center;">81.92</div>
<div class="t" style="left:896.5px;top:416.5px;line-height:16px;font-size:12px;color:#1e1e1e;font-weight:normal;transform:scaleX(0.9994);transform-origin:left center;">Not created</div>
<div class="t" style="left:1000px;top:416.5px;line-height:16px;font-size:12px;color:#1e1e1e;font-weight:normal;transform:scaleX(0.9994);transform-origin:left center;">Not created</div>
<div class="t" style="left:1100px;top:416.5px;line-height:16px;font-size:12px;color:#1e1e1e;font-weight:normal;transform:scaleX(0.9994);transform-origin:left center;">Not created</div>
<div class="t" style="left:1200.5px;top:416.5px;line-height:16px;font-size:12px;color:#1e1e1e;font-weight:normal;transform:scaleX(0.9994);transform-origin:left center;">Not created</div>
<div class="t" style="left:1300px;top:416.5px;line-height:16px;font-size:12px;color:#1e1e1e;font-weight:normal;transform:scaleX(0.9994);transform-origin:left center;">Not created</div>
<div style="position:absolute;left:373px;top:187px;width:1020px;height:253px;border:3px solid #f5393d;box-sizing:border-box;box-shadow:0 3px 5px rgba(0,0,0,0.3), inset 1px 3px 5px rgba(0,0,0,0.28)"></div>
<div style="position:absolute;left:1396px;top:145px;width:463px;height:603px;background:#f4f4f4;border:1px solid #8a8a8a;border-bottom:none;box-sizing:border-box"></div>
<div style="position:absolute;left:1397px;top:146px;width:461px;height:21px;background:#f2f2f2;border-bottom:1px solid #a0a0a0;box-sizing:border-box"></div>
<div class="t" style="left:1400.4px;top:149.0px;line-height:16px;font-size:12px;color:#1e1e1e;font-weight:normal;transform:scaleX(0.9142);transform-origin:left center;">Properties</div>
<svg style="position:absolute;left:1824px;top:151px" width="9" height="12" viewBox="0 0 9 12"><path d="M3 1 H6 V6.5 L7.5 8 H1.5 L3 6.5 Z" fill="#111" stroke="#111" stroke-width="1"/><path d="M3.6 2 V6" stroke="#fff" stroke-width="0.8"/><path d="M4.5 8 V11.5" stroke="#111" stroke-width="1.2"/></svg>
<svg style="position:absolute;left:1843px;top:152px" width="10" height="9" viewBox="0 0 10 9"><path d="M1 0.8 L9 8.2 M9 0.8 L1 8.2" stroke="#111" stroke-width="1.7"/></svg>
<svg style="position:absolute;left:1417px;top:177px" width="33" height="33" viewBox="0 0 33 33"><path d="M4.7 23 V10.5 H27.4 V23 M15.5 14 V23" fill="none" stroke="#222" stroke-width="1.2"/><rect x="8.1" y="0.6" width="15.8" height="14" fill="#d9683a" stroke="#222" stroke-width="1.2"/><rect x="0.6" y="23.2" width="8.6" height="8.6" fill="#fff" stroke="#222" stroke-width="1.2"/><rect x="11.3" y="23.2" width="9.4" height="8.6" fill="#fff" stroke="#222" stroke-width="1.2"/><rect x="23.2" y="23.2" width="8.8" height="8.6" fill="#fff" stroke="#222" stroke-width="1.2"/></svg>
<div class="t" style="left:1465px;top:178.5px;line-height:16px;font-size:15px;color:#000;font-weight:bold;transform:scaleX(0.9919);transform-origin:left center;">Level: 12 - LEVEL 9</div>
<div style="position:absolute;left:1404px;top:224px;width:448px;height:119px;border:1px solid #d3dde6;border-radius:3px;box-sizing:border-box"></div>
<div style="position:absolute;left:1408px;top:221px;width:50.6px;height:6px;background:#f4f4f4"></div>
<div class="t" style="left:1411.7px;top:215.9px;line-height:16px;font-size:12px;color:#2b9ad6;font-weight:bold;transform:scaleX(0.9532);transform-origin:left center;">General</div>
<div class="t" style="left:1413.4px;top:239.0px;line-height:16px;font-size:12px;color:#111;font-weight:normal;transform:scaleX(1.0075);transform-origin:left center;">Number</div>
<div class="t" style="left:1413.4px;top:264.0px;line-height:16px;font-size:12px;color:#111;font-weight:normal;transform:scaleX(0.9997);transform-origin:left center;">Name</div>
<div class="t" style="left:1413.4px;top:289.0px;line-height:16px;font-size:12px;color:#111;font-weight:normal;transform:scaleX(1.0113);transform-origin:left center;">Color</div>
<div class="t" style="left:1413.4px;top:312.1px;line-height:16px;font-size:12px;color:#111;font-weight:normal;transform:scaleX(0.9737);transform-origin:left center;">Room count</div>
<div style="position:absolute;left:1607px;top:263px;width:234px;height:22px;background:#fff;border:1px solid #ababab;box-sizing:border-box"></div>
<div class="t" style="left:1610px;top:264.0px;line-height:16px;font-size:12px;color:#111;font-weight:normal;transform:scaleX(0.8951);transform-origin:left center;">LEVEL 9</div>
<div style="position:absolute;left:1606px;top:237px;width:237px;height:23px;background:#fff"></div>
<div class="t" style="left:1610px;top:239.0px;line-height:16px;font-size:12px;color:#111;font-weight:normal;transform:scaleX(0.8615);transform-origin:left center;">12</div>
<div style="position:absolute;left:1608px;top:286px;width:137px;height:23px;background:#000;border:1px solid #ababab;box-sizing:border-box"></div>
<div style="position:absolute;left:1735px;top:299px;width:9px;height:9px;background:#fff"></div>
<svg style="position:absolute;left:1736px;top:301px" width="7" height="5" viewBox="0 0 7 5"><path d="M0.5 0.5 H6.5 L3.5 4 Z" fill="#000"/></svg>
<div style="position:absolute;left:1606px;top:310px;width:60px;height:23px;background:#f0f0f0;border:1px solid #ababab;box-sizing:border-box"></div>
<div class="t" style="right:197px;top:312.7px;line-height:16px;font-size:12px;color:#111;font-weight:normal;transform:scaleX(0.9300);transform-origin:right center;">13</div>
<div style="position:absolute;left:1605px;top:237px;width:238px;height:23px;border:3px solid #f5393d;box-sizing:border-box;box-shadow:0 2px 4px rgba(0,0,0,0.35), inset 0 2px 4px rgba(0,0,0,0.3)"></div>
<div style="position:absolute;left:1404px;top:355px;width:448px;height:96px;border:1px solid #d3dde6;border-radius:3px;box-sizing:border-box"></div>
<div style="position:absolute;left:1408px;top:352px;width:116.5px;height:6px;background:#f4f4f4"></div>
<div class="t" style="left:1411.7px;top:346.9px;line-height:16px;font-size:12px;color:#2b9ad6;font-weight:bold;transform:scaleX(0.9839);transform-origin:left center;">Programmed Areas</div>
<div class="t" style="left:1413.4px;top:370.3px;line-height:16px;font-size:12px;color:#111;font-weight:normal;transform:scaleX(1.0073);transform-origin:left center;">Gross/Net factor</div>
<div style="position:absolute;left:1606px;top:368px;width:60px;height:23px;background:#ffffff;border:1px solid #ababab;box-sizing:border-box"></div>
<div class="t" style="right:197px;top:370.7px;line-height:16px;font-size:12px;color:#111;font-weight:normal;transform:scaleX(0.9300);transform-origin:right center;">0.00</div>
<div class="t" style="left:1413.4px;top:395.3px;line-height:16px;font-size:12px;color:#111;font-weight:normal;transform:scaleX(0.9374);transform-origin:left center;">Gross</div>
<div style="position:absolute;left:1606px;top:393px;width:60px;height:23px;background:#f0f0f0;border:1px solid #ababab;box-sizing:border-box"></div>
<div class="t" style="right:197px;top:395.7px;line-height:16px;font-size:12px;color:#111;font-weight:normal;transform:scaleX(0.9300);transform-origin:right center;">341.00</div>
<div class="t" style="left:1413.4px;top:420.3px;line-height:16px;font-size:12px;color:#111;font-weight:normal;transform:scaleX(1.0710);transform-origin:left center;">Net</div>
<div style="position:absolute;left:1606px;top:418px;width:60px;height:23px;background:#f0f0f0;border:1px solid #ababab;box-sizing:border-box"></div>
<div class="t" style="right:197px;top:420.7px;line-height:16px;font-size:12px;color:#111;font-weight:normal;transform:scaleX(0.9300);transform-origin:right center;">341.00</div>
<div style="position:absolute;left:1404px;top:463px;width:448px;height:171px;border:1px solid #d3dde6;border-radius:3px;box-sizing:border-box"></div>
<div style="position:absolute;left:1408px;top:460px;width:95px;height:6px;background:#f4f4f4"></div>
<div class="t" style="left:1411.7px;top:454.9px;line-height:16px;font-size:12px;color:#2b9ad6;font-weight:bold;transform:scaleX(0.9638);transform-origin:left center;">Designed Areas</div>
<div class="t" style="left:1413.4px;top:478.3px;line-height:16px;font-size:12px;color:#111;font-weight:normal;transform:scaleX(0.9374);transform-origin:left center;">Gross</div>
<div style="position:absolute;left:1606px;top:476px;width:60px;height:23px;background:#ffffff;border:1px solid #ababab;box-sizing:border-box"></div>
<div class="t" style="right:197px;top:478.7px;line-height:16px;font-size:12px;color:#111;font-weight:normal;transform:scaleX(0.9300);transform-origin:right center;">0.00</div>
<div class="t" style="left:1413.4px;top:503.3px;line-height:16px;font-size:12px;color:#111;font-weight:normal;transform:scaleX(0.9428);transform-origin:left center;">Sum Gross Area</div>
<div style="position:absolute;left:1606px;top:501px;width:60px;height:23px;background:#f0f0f0;border:1px solid #ababab;box-sizing:border-box"></div>
<div class="t" style="right:197px;top:503.7px;line-height:16px;font-size:12px;color:#111;font-weight:normal;transform:scaleX(0.9300);transform-origin:right center;">0.00</div>
<div class="t" style="left:1413.4px;top:528.3px;line-height:16px;font-size:12px;color:#111;font-weight:normal;transform:scaleX(1.0710);transform-origin:left center;">Net</div>
<div style="position:absolute;left:1606px;top:526px;width:60px;height:23px;background:#f0f0f0;border:1px solid #ababab;box-sizing:border-box"></div>
<div class="t" style="right:197px;top:528.7px;line-height:16px;font-size:12px;color:#111;font-weight:normal;transform:scaleX(0.9300);transform-origin:right center;">367.21</div>
<div class="t" style="left:1413.4px;top:553.3px;line-height:16px;font-size:12px;color:#111;font-weight:normal;transform:scaleX(1.0073);transform-origin:left center;">Gross/Net factor</div>
<div style="position:absolute;left:1606px;top:551px;width:60px;height:23px;background:#f0f0f0;border:1px solid #ababab;box-sizing:border-box"></div>
<div class="t" style="right:197px;top:553.7px;line-height:16px;font-size:12px;color:#111;font-weight:normal;transform:scaleX(0.9300);transform-origin:right center;">0.00</div>
<div class="t" style="left:1413.4px;top:578.3px;line-height:16px;font-size:12px;color:#111;font-weight:normal;transform:scaleX(0.9947);transform-origin:left center;">Diff net (Design-Programmed)</div>
<div style="position:absolute;left:1606px;top:576px;width:60px;height:23px;background:#f0f0f0;border:1px solid #ababab;box-sizing:border-box"></div>
<div class="t" style="right:197px;top:578.7px;line-height:16px;font-size:12px;color:#111;font-weight:normal;transform:scaleX(0.9300);transform-origin:right center;">26.21</div>
<div class="t" style="left:1413.4px;top:603.3px;line-height:16px;font-size:12px;color:#111;font-weight:normal;transform:scaleX(0.9900);transform-origin:left center;">Diff gross (Designed-Programmed)</div>
<div style="position:absolute;left:1606px;top:601px;width:60px;height:23px;background:#f0f0f0;border:1px solid #ababab;box-sizing:border-box"></div>
<div class="t" style="right:197px;top:603.7px;line-height:16px;font-size:12px;color:#111;font-weight:normal;transform:scaleX(0.9300);transform-origin:right center;">-341.00</div>
<div style="position:absolute;left:1404px;top:646px;width:448px;height:97px;border:1px solid #d3dde6;border-radius:3px;box-sizing:border-box"></div>
<div style="position:absolute;left:1408px;top:643px;width:135px;height:6px;background:#f4f4f4"></div>
<div class="t" style="left:1411.7px;top:637.9px;line-height:16px;font-size:12px;color:#2b9ad6;font-weight:bold;transform:scaleX(0.9618);transform-origin:left center;">Function planner areas</div>
<div class="t" style="left:1413.4px;top:661.3px;line-height:16px;font-size:12px;color:#111;font-weight:normal;transform:scaleX(0.9374);transform-origin:left center;">Gross</div>
<div style="position:absolute;left:1606px;top:659px;width:60px;height:23px;background:#ffffff;border:1px solid #ababab;box-sizing:border-box"></div>
<div class="t" style="right:197px;top:661.7px;line-height:16px;font-size:12px;color:#111;font-weight:normal;transform:scaleX(0.9300);transform-origin:right center;">0.00</div>
<div class="t" style="left:1413.4px;top:686.3px;line-height:16px;font-size:12px;color:#111;font-weight:normal;transform:scaleX(1.0710);transform-origin:left center;">Net</div>
<div style="position:absolute;left:1606px;top:684px;width:60px;height:23px;background:#ffffff;border:1px solid #ababab;box-sizing:border-box"></div>
<div class="t" style="right:197px;top:686.7px;line-height:16px;font-size:12px;color:#111;font-weight:normal;transform:scaleX(0.9300);transform-origin:right center;">0.00</div>
<div class="t" style="left:1413.4px;top:711.3px;line-height:16px;font-size:12px;color:#111;font-weight:normal;transform:scaleX(1.0073);transform-origin:left center;">Gross/Net factor</div>
<div style="position:absolute;left:1606px;top:709px;width:60px;height:23px;background:#f0f0f0;border:1px solid #ababab;box-sizing:border-box"></div>
<div class="t" style="right:197px;top:711.7px;line-height:16px;font-size:12px;color:#111;font-weight:normal;transform:scaleX(0.9300);transform-origin:right center;">0.00</div>
</body></html>
